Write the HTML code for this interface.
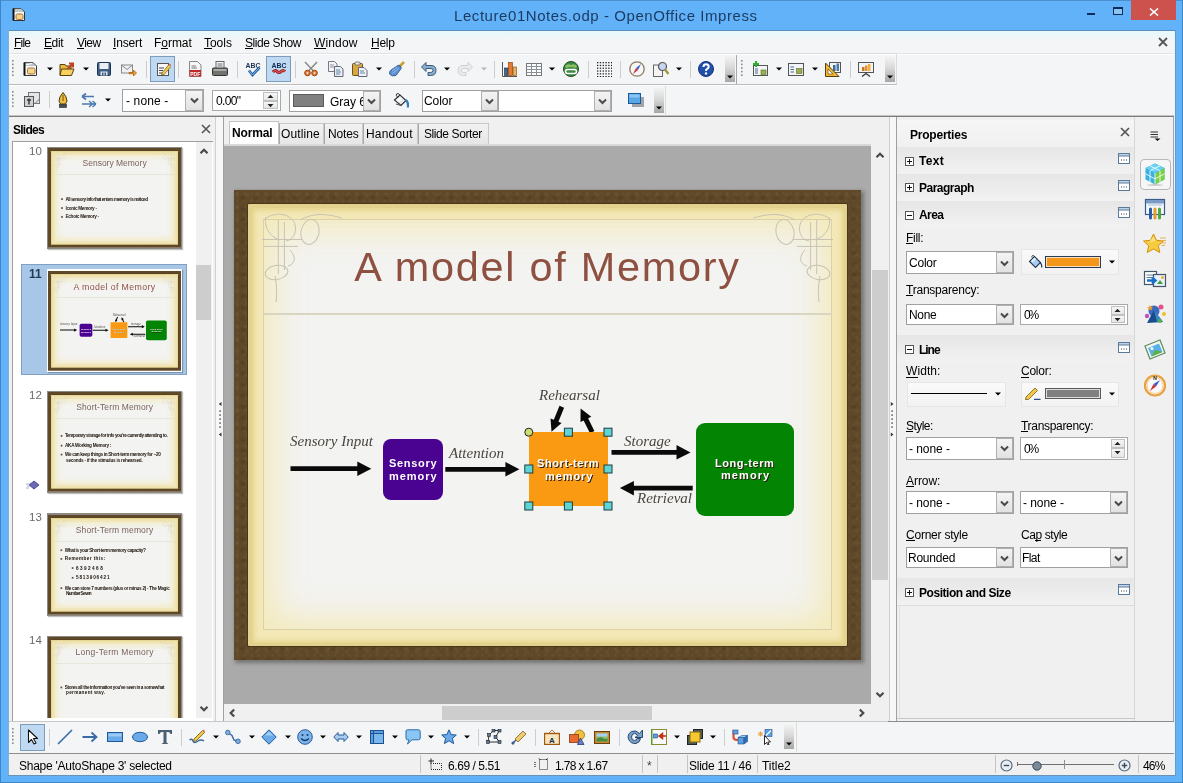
<!DOCTYPE html><html><head><meta charset="utf-8"><style>
html,body{margin:0;padding:0}
body{width:1183px;height:783px;position:relative;overflow:hidden;background:#62b2fa;font-family:"Liberation Sans",sans-serif}
div,span,svg{position:absolute;box-sizing:border-box}
.t{white-space:nowrap;line-height:1;will-change:transform}

</style></head><body>
<span class="t" style="left:454.20px;top:7.50px;font-size:15px;color:#1b3a5e;font-weight:normal;font-family:'Liberation Sans',sans-serif;font-style:normal;letter-spacing:0.566px;">Lecture01Notes.odp - OpenOffice Impress</span>
<div style="left:1087px;top:12.5px;width:8px;height:2.5px;background:#0f2d5a"></div>
<div style="left:1113px;top:7px;width:10px;height:8px;border:1px solid #0f2d5a;border-top-width:2px;background:#8cc4f0"></div>
<div style="left:1131px;top:0px;width:45px;height:20px;background:#cd514c"></div>
<svg style="position:absolute;left:1149px;top:8px;" width="10" height="8" viewBox="0 0 10 8"><path d="M1 0.5L9 7.5M9 0.5L1 7.5" stroke="#fff" stroke-width="1.6"/></svg>
<svg style="position:absolute;left:12px;top:7px;" width="14" height="15" viewBox="0 0 14 15"><path d="M1.5 1.5H9L12.5 5V13.5H1.5Z" fill="#fafafa" stroke="#333" stroke-width="1"/><path d="M1.5 1.5H9L12.5 5H1.5Z" fill="#9aa" opacity=".6"/><rect x="4" y="7" width="7" height="5.5" rx="1.5" fill="#f6d48a" stroke="#a07040" stroke-width="1"/><path d="M1.5 1.5V13.5" stroke="#111" stroke-width="2"/></svg>
<div style="left:8px;top:30px;width:1167px;height:745px;background:#f0f0f0"></div>
<div style="left:8px;top:30px;width:1167px;height:87px;background:#f4f5f6"></div>
<div style="left:8px;top:31px;width:1167px;height:10px;background:linear-gradient(#e6f8fc,#f4f5f6)"></div>
<div style="left:8px;top:54px;width:1167px;height:1px;background:#fff"></div>
<div style="left:8px;top:53px;width:1167px;height:1px;background:#e2e3e4"></div>
<div style="left:8px;top:115px;width:1167px;height:1px;background:#c4c4c4"></div>
<div style="left:8px;top:116px;width:1167px;height:1.5px;background:#7c7c7c"></div>
<span class="t" style="left:14.40px;top:36.84px;font-size:12px;color:#000;font-weight:normal;font-family:'Liberation Sans',sans-serif;font-style:normal;letter-spacing:-0.800px;">File</span>
<div style="left:14.4px;top:48.2px;width:6.4182237694300515px;height:1px;background:#000"></div>
<span class="t" style="left:44.30px;top:36.84px;font-size:12px;color:#000;font-weight:normal;font-family:'Liberation Sans',sans-serif;font-style:normal;letter-spacing:-0.400px;">Edit</span>
<div style="left:44.3px;top:48.2px;width:7.540647644927536px;height:1px;background:#000"></div>
<span class="t" style="left:76.50px;top:36.84px;font-size:12px;color:#000;font-weight:normal;font-family:'Liberation Sans',sans-serif;font-style:normal;letter-spacing:-0.567px;">View</span>
<div style="left:76.5px;top:48.2px;width:7.4772468507751935px;height:1px;background:#000"></div>
<span class="t" style="left:113.20px;top:36.84px;font-size:12px;color:#000;font-weight:normal;font-family:'Liberation Sans',sans-serif;font-style:normal;letter-spacing:-0.160px;">Insert</span>
<div style="left:113.2px;top:48.2px;width:3.245458333333333px;height:1px;background:#000"></div>
<span class="t" style="left:154.20px;top:36.84px;font-size:12px;color:#000;font-weight:normal;font-family:'Liberation Sans',sans-serif;font-style:normal;letter-spacing:-0.040px;">Format</span>
<div style="left:161.4911101973684px;top:48.2px;width:6.6383141447368414px;height:1px;background:#000"></div>
<span class="t" style="left:204.30px;top:36.84px;font-size:12px;color:#000;font-weight:normal;font-family:'Liberation Sans',sans-serif;font-style:normal;letter-spacing:-0.025px;">Tools</span>
<div style="left:204.3px;top:48.2px;width:7.303510044642857px;height:1px;background:#000"></div>
<span class="t" style="left:245.40px;top:36.84px;font-size:12px;color:#000;font-weight:normal;font-family:'Liberation Sans',sans-serif;font-style:normal;letter-spacing:-0.411px;">Slide Show</span>
<div style="left:245.4px;top:48.2px;width:7.511886439267886px;height:1px;background:#000"></div>
<span class="t" style="left:314.20px;top:36.84px;font-size:12px;color:#000;font-weight:normal;font-family:'Liberation Sans',sans-serif;font-style:normal;letter-spacing:0.140px;">Window</span>
<div style="left:314.2px;top:48.2px;width:11.512243852459013px;height:1px;background:#000"></div>
<span class="t" style="left:370.80px;top:36.84px;font-size:12px;color:#000;font-weight:normal;font-family:'Liberation Sans',sans-serif;font-style:normal;letter-spacing:-0.233px;">Help</span>
<div style="left:370.8px;top:48.2px;width:8.42004048582996px;height:1px;background:#000"></div>
<svg style="position:absolute;left:1158px;top:37px;" width="10" height="10" viewBox="0 0 10 10"><path d="M1 1L9 9M9 1L1 9" stroke="#555" stroke-width="1.8"/></svg>
<svg style="position:absolute;left:12px;top:60px;" width="3" height="19" viewBox="0 0 3 19"><rect x="0" y="0.0" width="1.6" height="1.6" fill="#8a8a8a"/><rect x="0" y="3.6" width="1.6" height="1.6" fill="#8a8a8a"/><rect x="0" y="7.2" width="1.6" height="1.6" fill="#8a8a8a"/><rect x="0" y="10.8" width="1.6" height="1.6" fill="#8a8a8a"/><rect x="0" y="14.4" width="1.6" height="1.6" fill="#8a8a8a"/></svg>
<svg style="position:absolute;left:23.3px;top:61.0px;" width="16" height="16" viewBox="0 0 16 16"><path d="M1.5 1.5H10L13.5 5V14.5H1.5Z" fill="#fafafa" stroke="#3a3a3a" stroke-width="1"/><path d="M1.5 1.5H10L13.5 5H1.5Z" fill="#8a9aaa" opacity=".6"/><path d="M2 4L9 2.5" stroke="#fff" stroke-width="1.2"/><rect x="4.5" y="7" width="7.5" height="6" rx="1.5" fill="#f6d48a" stroke="#a07040" stroke-width="1"/><path d="M1.5 1.5V14.5" stroke="#111" stroke-width="2"/></svg>
<svg style="position:absolute;left:58.8px;top:61.0px;" width="16" height="16" viewBox="0 0 16 16"><path d="M1 3.5H6L7 5H12V14H1Z" fill="#e8b840" stroke="#5a4010" stroke-width="1"/><path d="M2.5 8H15L12.5 14.5H1Z" fill="#f6d060" stroke="#5a4010" stroke-width="1"/><path d="M8.5 8L13.5 3M10 2.5H14V6.5" fill="none" stroke="#c04020" stroke-width="2"/></svg>
<svg style="position:absolute;left:96.0px;top:61.0px;" width="16" height="16" viewBox="0 0 16 16"><rect x="1.5" y="1.5" width="13" height="13" rx="1" fill="#3d5c82" stroke="#1e3350" stroke-width="1"/><rect x="3.5" y="2" width="9" height="6" fill="#e8eef4"/><rect x="4.5" y="10.5" width="7" height="4" fill="#dfe6ee"/><rect x="6" y="11.5" width="1.5" height="3" fill="#3d5c82"/><rect x="8.5" y="11.5" width="1.5" height="3" fill="#3d5c82"/></svg>
<svg style="position:absolute;left:121.0px;top:61.0px;" width="16" height="16" viewBox="0 0 16 16"><rect x="0.5" y="4" width="11" height="8" fill="#f0f0f0" stroke="#8a8a8a" stroke-width="1"/><path d="M0.5 4L6 8.5L11.5 4" fill="none" stroke="#8a8a8a" stroke-width="1"/><path d="M8 11.5H12.5V9L15.5 12L12.5 15V12.8H8Z" fill="#f0a040" stroke="#b06010" stroke-width=".8"/></svg>
<svg style="position:absolute;left:187.5px;top:61.0px;" width="16" height="16" viewBox="0 0 16 16"><path d="M1.5 0.5H9.5L13 4V15.5H1.5Z" fill="#f6f6f6" stroke="#888" stroke-width="1"/><path d="M3.5 5H8M3.5 7H9" stroke="#777" stroke-width="1"/><rect x="1.5" y="9" width="11.5" height="6.5" fill="#c0282a"/><text x="7.2" y="14.5" font-size="5" font-family="Liberation Sans" font-weight="bold" fill="#fff" text-anchor="middle">PDF</text></svg>
<svg style="position:absolute;left:212.0px;top:61.0px;" width="16" height="16" viewBox="0 0 16 16"><rect x="4" y="0.5" width="8" height="7" fill="#fafafa" stroke="#666" stroke-width="1"/><path d="M5.5 3H10.5M5.5 5H10.5" stroke="#667" stroke-width="1"/><rect x="0.5" y="7" width="15" height="7.5" rx="1" fill="#707470" stroke="#333" stroke-width="1"/><rect x="1.5" y="8" width="13" height="2" fill="#a8aca8"/></svg>
<svg style="position:absolute;left:245.0px;top:61.0px;" width="16" height="16" viewBox="0 0 16 16"><text x="8" y="6.8" font-size="8" font-family="Liberation Sans" font-weight="bold" fill="#1a3050" text-anchor="middle" textLength="15" lengthAdjust="spacingAndGlyphs">ABC</text><path d="M4 9.5L7.5 14L14.5 6.5" fill="none" stroke="#1a5aa0" stroke-width="2.6"/><path d="M4 9.5L7.5 14L14.5 6.5" fill="none" stroke="#8ac0ee" stroke-width="1"/></svg>
<svg style="position:absolute;left:303.0px;top:61.0px;" width="16" height="16" viewBox="0 0 16 16"><path d="M2 1L10.5 10M14 1L5.5 10" stroke="#8a8a8a" stroke-width="1.5"/><circle cx="4.5" cy="12" r="2.8" fill="#e07a30" stroke="#9a4510" stroke-width="1"/><circle cx="11.5" cy="12" r="2.8" fill="#e07a30" stroke="#9a4510" stroke-width="1"/><circle cx="4.5" cy="12" r="1" fill="#fde"/><circle cx="11.5" cy="12" r="1" fill="#fde"/></svg>
<svg style="position:absolute;left:327.5px;top:61.0px;" width="16" height="16" viewBox="0 0 16 16"><path d="M0.5 0.5H6.5L9 3V10.5H0.5Z" fill="#f2f4f6" stroke="#778" stroke-width="1"/><path d="M2 4H6M2 6H7" stroke="#778" stroke-width=".8"/><path d="M6.5 5.5H12.5L15 8V15.5H6.5Z" fill="#e6eef6" stroke="#667" stroke-width="1"/><path d="M8 9H12M8 11H13M8 13H12" stroke="#4a6a90" stroke-width=".8"/></svg>
<svg style="position:absolute;left:351.7px;top:61.0px;" width="16" height="16" viewBox="0 0 16 16"><rect x="0.5" y="2.5" width="10" height="12" rx="1" fill="#d8a840" stroke="#6a5020" stroke-width="1"/><rect x="3" y="1" width="5" height="3" rx="1" fill="#e8e8e8" stroke="#666" stroke-width=".8"/><path d="M6.5 6.5H12L15 9.5V15.5H6.5Z" fill="#eef2f6" stroke="#667" stroke-width="1"/><path d="M8 10H12M8 12H13" stroke="#4a6a90" stroke-width=".8"/></svg>
<svg style="position:absolute;left:389.0px;top:61.0px;" width="16" height="16" viewBox="0 0 16 16"><path d="M11 5L15 1" stroke="#c8a030" stroke-width="2.5"/><path d="M10 4.5L12 6.5" stroke="#555" stroke-width="1.5"/><path d="M9.5 4L12.5 7L7 14.5Q3 16 0.5 13Q0 10.5 2 9Z" fill="#5a8fd0" stroke="#2a5090" stroke-width=".8"/><path d="M3 10L8 6M3.5 12.5L9.5 7.5" stroke="#a8cef0" stroke-width=".8"/></svg>
<svg style="position:absolute;left:421.0px;top:61.0px;" width="16" height="16" viewBox="0 0 16 16"><path d="M5 4.5H10Q15 4.5 15 9.5Q15 14.5 9.5 14.5H7V11.5H9.5Q12 11.5 12 9.5Q12 7.5 10 7.5H5V10.5L0.5 6L5 1.5Z" fill="#8aaed0" stroke="#3a5a7a" stroke-width="1"/></svg>
<svg style="position:absolute;left:457.0px;top:61.0px;" width="16" height="16" viewBox="0 0 16 16"><path d="M11 4.5H6Q1 4.5 1 9.5Q1 14.5 6.5 14.5H9V11.5H6.5Q4 11.5 4 9.5Q4 7.5 6 7.5H11V10.5L15.5 6L11 1.5Z" fill="#ececec" stroke="#cfcfcf" stroke-width="1"/></svg>
<svg style="position:absolute;left:502.3px;top:61.0px;" width="16" height="16" viewBox="0 0 16 16"><path d="M0.5 1V15.5H15" fill="none" stroke="#555" stroke-width="1"/><rect x="2.5" y="7" width="3.5" height="7.5" fill="#3d6a90" stroke="#223" stroke-width=".6"/><rect x="6.5" y="1.5" width="4" height="13" fill="#e87a30" stroke="#7a3a10" stroke-width=".6"/><rect x="11" y="6" width="3.5" height="8.5" fill="#f0b060" stroke="#7a4a10" stroke-width=".6"/></svg>
<svg style="position:absolute;left:526.0px;top:61.0px;" width="16" height="16" viewBox="0 0 16 16"><rect x="0.5" y="2.5" width="15" height="12" fill="#fafbfc" stroke="#777" stroke-width="1"/><path d="M0.5 5.5H15.5M0.5 8.5H15.5M0.5 11.5H15.5M5.5 2.5V14.5M10.5 2.5V14.5" stroke="#8a8f95" stroke-width="1"/></svg>
<svg style="position:absolute;left:563.0px;top:61.0px;" width="16" height="16" viewBox="0 0 16 16"><circle cx="8" cy="8" r="7.5" fill="#3a8a40" stroke="#1e4a20" stroke-width="1"/><path d="M2 5Q5 2 8 4Q11 2 14 5L13 7Q8 5 3 7Z" fill="#8ac060"/><rect x="2.5" y="8.5" width="11" height="4" rx="2" fill="none" stroke="#fff" stroke-width="1.6"/></svg>
<svg style="position:absolute;left:596.0px;top:61.0px;" width="16" height="16" viewBox="0 0 16 16"><rect x="1.0" y="1.0" width="1.3" height="1.3" fill="#222"/><rect x="1.0" y="3.8" width="1.3" height="1.3" fill="#222"/><rect x="1.0" y="6.6" width="1.3" height="1.3" fill="#222"/><rect x="1.0" y="9.4" width="1.3" height="1.3" fill="#222"/><rect x="1.0" y="12.2" width="1.3" height="1.3" fill="#222"/><rect x="1.0" y="15.0" width="1.3" height="1.3" fill="#222"/><rect x="3.8" y="1.0" width="1.3" height="1.3" fill="#222"/><rect x="3.8" y="3.8" width="1.3" height="1.3" fill="#222"/><rect x="3.8" y="6.6" width="1.3" height="1.3" fill="#222"/><rect x="3.8" y="9.4" width="1.3" height="1.3" fill="#222"/><rect x="3.8" y="12.2" width="1.3" height="1.3" fill="#222"/><rect x="3.8" y="15.0" width="1.3" height="1.3" fill="#222"/><rect x="6.6" y="1.0" width="1.3" height="1.3" fill="#222"/><rect x="6.6" y="3.8" width="1.3" height="1.3" fill="#222"/><rect x="6.6" y="6.6" width="1.3" height="1.3" fill="#222"/><rect x="6.6" y="9.4" width="1.3" height="1.3" fill="#222"/><rect x="6.6" y="12.2" width="1.3" height="1.3" fill="#222"/><rect x="6.6" y="15.0" width="1.3" height="1.3" fill="#222"/><rect x="9.4" y="1.0" width="1.3" height="1.3" fill="#222"/><rect x="9.4" y="3.8" width="1.3" height="1.3" fill="#222"/><rect x="9.4" y="6.6" width="1.3" height="1.3" fill="#222"/><rect x="9.4" y="9.4" width="1.3" height="1.3" fill="#222"/><rect x="9.4" y="12.2" width="1.3" height="1.3" fill="#222"/><rect x="9.4" y="15.0" width="1.3" height="1.3" fill="#222"/><rect x="12.2" y="1.0" width="1.3" height="1.3" fill="#222"/><rect x="12.2" y="3.8" width="1.3" height="1.3" fill="#222"/><rect x="12.2" y="6.6" width="1.3" height="1.3" fill="#222"/><rect x="12.2" y="9.4" width="1.3" height="1.3" fill="#222"/><rect x="12.2" y="12.2" width="1.3" height="1.3" fill="#222"/><rect x="12.2" y="15.0" width="1.3" height="1.3" fill="#222"/><rect x="15.0" y="1.0" width="1.3" height="1.3" fill="#222"/><rect x="15.0" y="3.8" width="1.3" height="1.3" fill="#222"/><rect x="15.0" y="6.6" width="1.3" height="1.3" fill="#222"/><rect x="15.0" y="9.4" width="1.3" height="1.3" fill="#222"/><rect x="15.0" y="12.2" width="1.3" height="1.3" fill="#222"/><rect x="15.0" y="15.0" width="1.3" height="1.3" fill="#222"/></svg>
<svg style="position:absolute;left:628.5px;top:61.0px;" width="16" height="16" viewBox="0 0 16 16"><circle cx="8" cy="8" r="7.2" fill="#f6f6f6" stroke="#8a7a60" stroke-width="1.3"/><path d="M12 3L9 9L7 7Z" fill="#3a5ad0"/><path d="M4 13L7 7L9 9Z" fill="#d03030"/></svg>
<svg style="position:absolute;left:653.0px;top:61.0px;" width="16" height="16" viewBox="0 0 16 16"><rect x="0.5" y="4" width="9" height="11.5" fill="#f4f4f4" stroke="#666" stroke-width="1"/><circle cx="9.5" cy="5.5" r="4" fill="#c8d4f0" stroke="#555" stroke-width="1.2"/><path d="M12 8.5L15.5 13" stroke="#9a9a30" stroke-width="2.2"/></svg>
<svg style="position:absolute;left:698.0px;top:61.0px;" width="16" height="16" viewBox="0 0 16 16"><circle cx="8" cy="8" r="7.5" fill="#2050a8" stroke="#15307a" stroke-width="1"/><path d="M5.5 6Q5.5 3.3 8 3.3Q10.7 3.3 10.7 5.8Q10.7 7.3 8.8 8.2Q8 8.7 8 10" fill="none" stroke="#fff" stroke-width="2"/><circle cx="8" cy="12.4" r="1.2" fill="#fff"/></svg>
<div style="left:150px;top:56.3px;width:25px;height:26.2px;background:#c0d9f2;border:1px solid #7d9cbc"></div>
<svg style="position:absolute;left:154.5px;top:61.0px;" width="16" height="16" viewBox="0 0 16 16"><rect x="2.5" y="2.5" width="11" height="12" fill="#f8f8f8" stroke="#555" stroke-width="1"/><path d="M4 7H9M4 9.5H8M4 12H10" stroke="#445" stroke-width="1"/><path d="M7 12L14 3.5L16 5.5L9 13.5L6.5 14Z" fill="#f0d050" stroke="#806010" stroke-width=".8"/><path d="M14 3.5L15 2.5L16.5 4L16 5.5Z" fill="#e07070"/></svg>
<div style="left:266px;top:56.3px;width:25px;height:26.2px;background:#c0d9f2;border:1px solid #7d9cbc"></div>
<svg style="position:absolute;left:270.5px;top:61.0px;" width="16" height="16" viewBox="0 0 16 16"><text x="8" y="6.8" font-size="8" font-family="Liberation Sans" font-weight="bold" fill="#102a50" text-anchor="middle" textLength="15" lengthAdjust="spacingAndGlyphs">ABC</text><path d="M2 11Q4 8.5 6 10.5T10 10.5T14 10.5" fill="none" stroke="#8a1818" stroke-width="3"/><path d="M2 11Q4 8.5 6 10.5T10 10.5T14 10.5" fill="none" stroke="#e05050" stroke-width="1.2"/></svg>
<svg style="position:absolute;left:46.6px;top:67px;" width="6" height="4" viewBox="0 0 6 4"><path d="M0 0.5H6L3 3.5Z" fill="#000"/></svg>
<svg style="position:absolute;left:82.5px;top:67px;" width="6" height="4" viewBox="0 0 6 4"><path d="M0 0.5H6L3 3.5Z" fill="#000"/></svg>
<svg style="position:absolute;left:375.5px;top:67px;" width="6" height="4" viewBox="0 0 6 4"><path d="M0 0.5H6L3 3.5Z" fill="#000"/></svg>
<svg style="position:absolute;left:444.4px;top:67px;" width="6" height="4" viewBox="0 0 6 4"><path d="M0 0.5H6L3 3.5Z" fill="#000"/></svg>
<svg style="position:absolute;left:549.3px;top:67px;" width="6" height="4" viewBox="0 0 6 4"><path d="M0 0.5H6L3 3.5Z" fill="#000"/></svg>
<svg style="position:absolute;left:676.3px;top:67px;" width="6" height="4" viewBox="0 0 6 4"><path d="M0 0.5H6L3 3.5Z" fill="#000"/></svg>
<svg style="position:absolute;left:480.6px;top:67px;" width="6" height="4" viewBox="0 0 6 4"><path d="M0 0.5H6L3 3.5Z" fill="#b8b8b8"/></svg>
<div style="left:145.8px;top:61px;width:1px;height:17px;background:#cdcdcd"></div>
<div style="left:178.3px;top:61px;width:1px;height:17px;background:#cdcdcd"></div>
<div style="left:236.5px;top:61px;width:1px;height:17px;background:#cdcdcd"></div>
<div style="left:295px;top:61px;width:1px;height:17px;background:#cdcdcd"></div>
<div style="left:413.6px;top:61px;width:1px;height:17px;background:#cdcdcd"></div>
<div style="left:493.8px;top:61px;width:1px;height:17px;background:#cdcdcd"></div>
<div style="left:587.5px;top:61px;width:1px;height:17px;background:#cdcdcd"></div>
<div style="left:620.2px;top:61px;width:1px;height:17px;background:#cdcdcd"></div>
<div style="left:689.5px;top:61px;width:1px;height:17px;background:#cdcdcd"></div>
<div style="left:725px;top:56px;width:10px;height:26px;background:linear-gradient(#f2f2f2,#d8d8d8 45%,#a6a6a6)"></div>
<svg style="position:absolute;left:727.0px;top:75px;" width="6" height="4" viewBox="0 0 6 4"><path d="M0 0.5H6L3 3.5Z" fill="#000"/></svg>
<div style="left:736px;top:55px;width:1px;height:29px;background:#a8a8a8"></div>
<div style="left:8px;top:84px;width:889px;height:1px;background:#bcbcbc"></div>
<div style="left:8px;top:85px;width:889px;height:1px;background:#ffffff"></div>
<div style="left:737px;top:53px;width:160px;height:31px;border:1px solid #dcdcdc;border-left:none;border-bottom:none"></div>
<svg style="position:absolute;left:741px;top:60px;" width="3" height="19" viewBox="0 0 3 19"><rect x="0" y="0.0" width="1.6" height="1.6" fill="#8a8a8a"/><rect x="0" y="3.6" width="1.6" height="1.6" fill="#8a8a8a"/><rect x="0" y="7.2" width="1.6" height="1.6" fill="#8a8a8a"/><rect x="0" y="10.8" width="1.6" height="1.6" fill="#8a8a8a"/><rect x="0" y="14.4" width="1.6" height="1.6" fill="#8a8a8a"/></svg>
<svg style="position:absolute;left:752.0px;top:61.0px;" width="16" height="16" viewBox="0 0 16 16"><rect x="1.5" y="4.5" width="14" height="10" fill="#f2f4f6" stroke="#555" stroke-width="1"/><path d="M3 8H6M3 10H6M3 12H6" stroke="#4a6a90" stroke-width="1"/><rect x="9" y="9" width="5" height="4.5" fill="#9ab050" stroke="#5a7020" stroke-width=".6"/><path d="M4 0V6M1 3H7" stroke="#30b030" stroke-width="2.2"/></svg>
<svg style="position:absolute;left:775.6px;top:67px;" width="6" height="4" viewBox="0 0 6 4"><path d="M0 0.5H6L3 3.5Z" fill="#000"/></svg>
<svg style="position:absolute;left:788.0px;top:61.0px;" width="16" height="16" viewBox="0 0 16 16"><rect x="0.5" y="2.5" width="15" height="12" fill="#f2f4f6" stroke="#555" stroke-width="1"/><path d="M2.5 6H6M2.5 8.5H6M2.5 11H6" stroke="#4a6a90" stroke-width="1"/><rect x="8.5" y="7.5" width="5.5" height="5" fill="#9ab050" stroke="#5a7020" stroke-width=".6"/></svg>
<svg style="position:absolute;left:811.5px;top:67px;" width="6" height="4" viewBox="0 0 6 4"><path d="M0 0.5H6L3 3.5Z" fill="#000"/></svg>
<svg style="position:absolute;left:824.7px;top:61.0px;" width="16" height="16" viewBox="0 0 16 16"><rect x="4.5" y="1.5" width="11" height="10" fill="#f4f4f4" stroke="#555" stroke-width="1"/><rect x="8" y="4" width="2.5" height="6" fill="#3d6a90"/><rect x="11.5" y="2.5" width="2.5" height="7.5" fill="#4a7ab0"/><path d="M0.5 2V15.5H14Z" fill="#f0b830" stroke="#5a4010" stroke-width="1"/><path d="M3 8V13H8Z" fill="#f4f4f4" stroke="#5a4010" stroke-width=".6"/></svg>
<div style="left:849.5px;top:61px;width:1px;height:17px;background:#cdcdcd"></div>
<svg style="position:absolute;left:858.0px;top:61.0px;" width="16" height="16" viewBox="0 0 16 16"><rect x="0.5" y="1.5" width="15" height="10" fill="#f4f4f4" stroke="#555" stroke-width="1"/><rect x="4" y="6" width="2.5" height="4" fill="#d07020"/><rect x="7" y="4.5" width="2.5" height="5.5" fill="#e89030"/><rect x="10" y="3" width="2.5" height="7" fill="#f0b040"/><path d="M8 11.5V13M4 15.5L8 12.5L12 15.5" fill="none" stroke="#333" stroke-width="1.2"/></svg>
<div style="left:885px;top:56.5px;width:9.5px;height:25.099999999999994px;background:linear-gradient(#f2f2f2,#d8d8d8 45%,#a6a6a6)"></div>
<svg style="position:absolute;left:886.75px;top:74.6px;" width="6" height="4" viewBox="0 0 6 4"><path d="M0 0.5H6L3 3.5Z" fill="#000"/></svg>
<svg style="position:absolute;left:12px;top:91px;" width="3" height="19" viewBox="0 0 3 19"><rect x="0" y="0.0" width="1.6" height="1.6" fill="#8a8a8a"/><rect x="0" y="3.6" width="1.6" height="1.6" fill="#8a8a8a"/><rect x="0" y="7.2" width="1.6" height="1.6" fill="#8a8a8a"/><rect x="0" y="10.8" width="1.6" height="1.6" fill="#8a8a8a"/><rect x="0" y="14.4" width="1.6" height="1.6" fill="#8a8a8a"/></svg>
<svg style="position:absolute;left:24.0px;top:91.5px;" width="16" height="16" viewBox="0 0 16 16"><rect x="4.5" y="0.5" width="11" height="11" fill="#e4e6e8" stroke="#777" stroke-width="1"/><path d="M11 11.5L15.5 7" fill="#fff" stroke="#777" stroke-width="1"/><rect x="0.5" y="4.5" width="9" height="10" fill="#cfd2d5" stroke="#555" stroke-width="1"/><path d="M5 6.5V12.5M3 8H7" stroke="#333" stroke-width="1.4"/></svg>
<div style="left:48.6px;top:91px;width:1px;height:17px;background:#cdcdcd"></div>
<svg style="position:absolute;left:57.5px;top:91.5px;" width="16" height="16" viewBox="0 0 16 16"><path d="M5 0.5Q1 5 1 9L2.5 12H7.5L9 9Q9 5 5 0.5Z" fill="#f0c040" stroke="#4a3810" stroke-width="1"/><path d="M5 3V9" stroke="#4a3810" stroke-width=".8"/><rect x="1.5" y="12.5" width="7" height="3" fill="#40504a" stroke="#222" stroke-width=".6"/></svg>
<svg style="position:absolute;left:81.0px;top:91.5px;" width="16" height="16" viewBox="0 0 16 16"><path d="M1 4.5H13M1 4.5L5 1.5M1 4.5L5 7.5" fill="none" stroke="#4a78b0" stroke-width="1.6"/><path d="M1 12H15M15 12L11.5 9M15 12L11.5 15M11.5 12L8 9M11.5 12L8 15" fill="none" stroke="#4a78b0" stroke-width="1.3"/></svg>
<svg style="position:absolute;left:104.5px;top:97.5px;" width="6" height="4" viewBox="0 0 6 4"><path d="M0 0.5H6L3 3.5Z" fill="#000"/></svg>
<div style="left:122px;top:89.2px;width:82px;height:22.5px;background:#fff;border:1px solid #a0a0a0"></div>
<div style="left:185px;top:90.2px;width:18px;height:20.5px;background:linear-gradient(#f4f4f4,#e2e2e2);border:1px solid #b0b0b0"></div>
<svg style="position:absolute;left:189.5px;top:97.45px;" width="9" height="7" viewBox="0 0 9 7"><path d="M1 1.5L4.5 5L8 1.5" fill="none" stroke="#4a4a4a" stroke-width="2"/></svg>
<span class="t" style="left:125.50px;top:94.59px;font-size:12px;color:#000;font-weight:normal;font-family:'Liberation Sans',sans-serif;font-style:normal;letter-spacing:0.129px;">- none -</span>
<div style="left:212px;top:90.2px;width:69px;height:20.700000000000003px;background:#fff;border:1px solid #a8a8a8"></div>
<div style="left:263px;top:92.2px;width:15px;height:8.350000000000009px;background:linear-gradient(#f6f6f6,#e6e6e6);border:1px solid #c0c0c0"></div>
<div style="left:263px;top:100.55000000000001px;width:15px;height:8.349999999999994px;background:linear-gradient(#f6f6f6,#e6e6e6);border:1px solid #c0c0c0"></div>
<svg style="position:absolute;left:267.0px;top:93.55000000000001px;" width="7" height="5" viewBox="0 0 7 5"><path d="M0.5 4L3.5 0.8L6.5 4Z" fill="#222"/></svg>
<svg style="position:absolute;left:267.0px;top:102.55000000000001px;" width="7" height="5" viewBox="0 0 7 5"><path d="M0.5 1L3.5 4.2L6.5 1Z" fill="#222"/></svg>
<span class="t" style="left:216.30px;top:94.69px;font-size:12px;color:#000;font-weight:normal;font-family:'Liberation Sans',sans-serif;font-style:normal;letter-spacing:-0.675px;">0.00"</span>
<div style="left:289.4px;top:89.5px;width:91.60000000000002px;height:22.0px;background:#fff;border:1px solid #a0a0a0"></div>
<div style="left:364px;top:90.5px;width:16px;height:20.0px;background:linear-gradient(#f4f4f4,#e2e2e2);border:1px solid #b0b0b0"></div>
<svg style="position:absolute;left:367.5px;top:97.5px;" width="9" height="7" viewBox="0 0 9 7"><path d="M1 1.5L4.5 5L8 1.5" fill="none" stroke="#4a4a4a" stroke-width="2"/></svg>
<div style="left:293px;top:94px;width:31px;height:12.6px;background:#808080;border:1px solid #5a5a5a"></div>
<span class="t" style="left:329.60px;top:95.54px;font-size:12px;color:#000;font-weight:normal;font-family:'Liberation Sans',sans-serif;font-style:normal;letter-spacing:0.000px;">Gray 6</span>
<div style="left:362.5px;top:90.5px;width:17.0px;height:20.0px;background:linear-gradient(#f4f4f4,#e2e2e2);border:1px solid #b0b0b0"></div>
<svg style="position:absolute;left:366.5px;top:97.5px;" width="9" height="7" viewBox="0 0 9 7"><path d="M1 1.5L4.5 5L8 1.5" fill="none" stroke="#4a4a4a" stroke-width="2"/></svg>
<svg style="position:absolute;left:393.0px;top:91.5px;" width="16" height="16" viewBox="0 0 16 16"><path d="M1.5 8L7 3L13 8.5L8 13.5Z" fill="#e8eaec" stroke="#333" stroke-width="1.2"/><path d="M3 8L7 4.5L9.5 6.8L5.5 10.5Z" fill="#fafafa"/><path d="M7 3Q5 0.5 3.5 2Q2.5 3.5 5 5.5" fill="none" stroke="#333" stroke-width="1"/><path d="M12.5 8Q15.5 9.5 15 15.5" fill="none" stroke="#2a80c0" stroke-width="2.4"/><path d="M3 12L8 13.5" stroke="#555" stroke-width="1"/></svg>
<div style="left:422.4px;top:89.5px;width:76.10000000000002px;height:22.0px;background:#fff;border:1px solid #a0a0a0"></div>
<div style="left:480.5px;top:90.5px;width:17.0px;height:20.0px;background:linear-gradient(#f4f4f4,#e2e2e2);border:1px solid #b0b0b0"></div>
<svg style="position:absolute;left:484.5px;top:97.5px;" width="9" height="7" viewBox="0 0 9 7"><path d="M1 1.5L4.5 5L8 1.5" fill="none" stroke="#4a4a4a" stroke-width="2"/></svg>
<span class="t" style="left:424.40px;top:94.64px;font-size:12px;color:#000;font-weight:normal;font-family:'Liberation Sans',sans-serif;font-style:normal;letter-spacing:-0.075px;">Color</span>
<div style="left:498px;top:89.5px;width:113.70000000000005px;height:22.0px;background:#fff;border:1px solid #a0a0a0"></div>
<div style="left:593.7px;top:90.5px;width:17.0px;height:20.0px;background:linear-gradient(#f4f4f4,#e2e2e2);border:1px solid #b0b0b0"></div>
<svg style="position:absolute;left:597.7px;top:97.5px;" width="9" height="7" viewBox="0 0 9 7"><path d="M1 1.5L4.5 5L8 1.5" fill="none" stroke="#4a4a4a" stroke-width="2"/></svg>
<svg style="position:absolute;left:627.5px;top:91.5px;" width="16" height="16" viewBox="0 0 16 16"><rect x="4" y="5" width="12" height="10" fill="#9ea4aa"/><rect x="0.5" y="1.5" width="12" height="10" fill="#58a8e8" stroke="#1a5a98" stroke-width="1"/><rect x="1.5" y="2.5" width="10" height="3" fill="#8ac6f4"/></svg>
<div style="left:654px;top:88px;width:9.600000000000023px;height:24.599999999999994px;background:linear-gradient(#f2f2f2,#d8d8d8 45%,#a6a6a6)"></div>
<svg style="position:absolute;left:655.8px;top:105.6px;" width="6" height="4" viewBox="0 0 6 4"><path d="M0 0.5H6L3 3.5Z" fill="#000"/></svg>
<div style="left:665px;top:86px;width:1px;height:30px;background:#dadada"></div>
<div style="left:8px;top:117px;width:208px;height:604px;background:#f0f0f0"></div>
<span class="t" style="left:12.80px;top:123.54px;font-size:12px;color:#000;font-weight:bold;font-family:'Liberation Sans',sans-serif;font-style:normal;letter-spacing:-0.760px;">Slides</span>
<svg style="position:absolute;left:201px;top:124px;" width="10" height="10" viewBox="0 0 10 10"><path d="M1 1L9 9M9 1L1 9" stroke="#555" stroke-width="1.6"/></svg>
<div style="left:12px;top:141px;width:201px;height:580px;background:#fff;border-top:1px solid #a0a0a0;border-left:1px solid #a0a0a0"></div>
<div style="left:196px;top:142px;width:16px;height:576px;background:#f0f0f0"></div>
<div style="left:196px;top:265px;width:15px;height:55px;background:#cdcdcd"></div>
<svg style="position:absolute;left:198px;top:147px;" width="12" height="8" viewBox="0 0 12 8"><path d="M2.5 6.2L6 2.7L9.5 6.2" fill="none" stroke="#4a4a4a" stroke-width="2.2"/></svg>
<svg style="position:absolute;left:198px;top:705px;" width="12" height="8" viewBox="0 0 12 8"><path d="M2.5 1.8L6 5.3L9.5 1.8" fill="none" stroke="#4a4a4a" stroke-width="2.2"/></svg>
<div style="left:0;top:0;width:1183px;height:783px;clip-path:inset(142px 987px 65px 13px)">
<div style="left:21.3px;top:264.3px;width:166px;height:111px;background:#a8c6e6;border:1px solid #7f9fc4"></div>
<div style="left:46.5px;top:146.79999999999998px;width:135.5px;height:102.3px;background:#8e8882;box-shadow:1px 1px 1px rgba(0,0,0,.25)"></div>
<div style="left:48px;top:148.1px;width:627px;height:470px;transform:scale(0.2121);transform-origin:0 0;">
<div style="left:0px;top:0px;width:627px;height:470px;background:#5e4828;background-image:radial-gradient(ellipse 3px 4px at 30% 40%, rgba(130,105,70,.28), transparent),radial-gradient(ellipse 4px 3px at 70% 70%, rgba(35,24,8,.22), transparent),radial-gradient(circle 2px at 50% 50%, rgba(140,115,80,.2), transparent);background-size:10px 12px,13px 11px,7px 7px;"></div>
<div style="left:13px;top:13px;width:601px;height:444px;background:#4a361a;border-radius:2px"></div>
<div style="left:14px;top:14px;width:599px;height:442px;background:#e2d28e;border-radius:1px"></div>
<div style="left:17.5px;top:17.5px;width:592px;height:435px;background:#f3e8b6;box-shadow:inset 0 0 5px 2px rgba(225,205,125,.8)"></div>
<div style="left:29px;top:29px;width:569px;height:411px;background:#f3f3f2;border:1px solid rgba(215,205,160,.9);box-shadow:inset 0 0 36px 8px rgba(243,232,170,.85)"></div>
<div style="left:29px;top:122.5px;width:569px;height:2px;background:#d9d6c0"></div>
<svg style="position:absolute;left:0px;top:0px;" width="627" height="470" viewBox="0 0 627 470"><g fill="none" stroke="#c8c3b3" stroke-width="1"><ellipse cx="76" cy="42" rx="9" ry="12.5" transform="rotate(12 76 42)"/><path d="M30 30 C38 22 54 22 60 32 C64 40 60 50 52 51"/><path d="M32 27 C30 36 34 46 46 50"/><path d="M28 49.5 H68 M30 56.4 H64"/><path d="M44.3 30 V84 M50.4 32 V80"/><ellipse cx="42.5" cy="82.5" rx="11.5" ry="7" transform="rotate(-10 42.5 82.5)"/><path d="M41 86 C43 96 43 104 42 112"/><path d="M66 30 C80 22 94 24 108 28"/><path d="M56 60 C62 66 62 74 54 76"/></g><g transform="translate(627,0) scale(-1,1)"><g fill="none" stroke="#c8c3b3" stroke-width="1"><ellipse cx="76" cy="42" rx="9" ry="12.5" transform="rotate(12 76 42)"/><path d="M30 30 C38 22 54 22 60 32 C64 40 60 50 52 51"/><path d="M32 27 C30 36 34 46 46 50"/><path d="M28 49.5 H68 M30 56.4 H64"/><path d="M44.3 30 V84 M50.4 32 V80"/><ellipse cx="42.5" cy="82.5" rx="11.5" ry="7" transform="rotate(-10 42.5 82.5)"/><path d="M41 86 C43 96 43 104 42 112"/><path d="M66 30 C80 22 94 24 108 28"/><path d="M56 60 C62 66 62 74 54 76"/></g></g></svg>
<span class="t" style="left:0;width:627px;text-align:center;display:none"></span>
<span class="t" style="left:162.50px;top:53.14px;font-size:40px;color:#7a625a;font-weight:normal;font-family:'Liberation Sans',sans-serif;font-style:normal;letter-spacing:-0.023px;">Sensory Memory</span>
<div style="left:62px;top:237px;width:8px;height:8px;background:#5a4a38"></div>
<span class="t" style="left:82.00px;top:230.38px;font-size:22px;color:#1a120a;font-weight:bold;font-family:'Liberation Sans',sans-serif;font-style:normal;letter-spacing:-2.091px;">All sensory info that enters memory is noticed</span>
<div style="left:62px;top:279px;width:8px;height:8px;background:#5a4a38"></div>
<span class="t" style="left:82.00px;top:272.38px;font-size:22px;color:#1a120a;font-weight:bold;font-family:'Liberation Sans',sans-serif;font-style:normal;letter-spacing:-1.321px;">Iconic Memory -</span>
<div style="left:62px;top:321px;width:8px;height:8px;background:#5a4a38"></div>
<span class="t" style="left:82.00px;top:314.38px;font-size:22px;color:#1a120a;font-weight:bold;font-family:'Liberation Sans',sans-serif;font-style:normal;letter-spacing:-1.214px;">Echoic Memory -</span>
</div>
<span class="t" style="left:29.00px;top:145.87px;font-size:11.5px;color:#6a6a6a;font-weight:normal;font-family:'Liberation Sans',sans-serif;font-style:normal;">10</span>
<div style="left:46.5px;top:269.3px;width:135.5px;height:102.3px;background:#ffffff;box-shadow:1px 1px 1px rgba(0,0,0,.25)"></div>
<div style="left:48px;top:270.6px;width:627px;height:470px;transform:scale(0.2121);transform-origin:0 0;">
<div style="left:0px;top:0px;width:627px;height:470px;background:#5e4828;background-image:radial-gradient(ellipse 3px 4px at 30% 40%, rgba(130,105,70,.28), transparent),radial-gradient(ellipse 4px 3px at 70% 70%, rgba(35,24,8,.22), transparent),radial-gradient(circle 2px at 50% 50%, rgba(140,115,80,.2), transparent);background-size:10px 12px,13px 11px,7px 7px;"></div>
<div style="left:13px;top:13px;width:601px;height:444px;background:#4a361a;border-radius:2px"></div>
<div style="left:14px;top:14px;width:599px;height:442px;background:#e2d28e;border-radius:1px"></div>
<div style="left:17.5px;top:17.5px;width:592px;height:435px;background:#f3e8b6;box-shadow:inset 0 0 5px 2px rgba(225,205,125,.8)"></div>
<div style="left:29px;top:29px;width:569px;height:411px;background:#f3f3f2;border:1px solid rgba(215,205,160,.9);box-shadow:inset 0 0 36px 8px rgba(243,232,170,.85)"></div>
<div style="left:29px;top:122.5px;width:569px;height:2px;background:#d9d6c0"></div>
<svg style="position:absolute;left:0px;top:0px;" width="627" height="470" viewBox="0 0 627 470"><g fill="none" stroke="#c8c3b3" stroke-width="1"><ellipse cx="76" cy="42" rx="9" ry="12.5" transform="rotate(12 76 42)"/><path d="M30 30 C38 22 54 22 60 32 C64 40 60 50 52 51"/><path d="M32 27 C30 36 34 46 46 50"/><path d="M28 49.5 H68 M30 56.4 H64"/><path d="M44.3 30 V84 M50.4 32 V80"/><ellipse cx="42.5" cy="82.5" rx="11.5" ry="7" transform="rotate(-10 42.5 82.5)"/><path d="M41 86 C43 96 43 104 42 112"/><path d="M66 30 C80 22 94 24 108 28"/><path d="M56 60 C62 66 62 74 54 76"/></g><g transform="translate(627,0) scale(-1,1)"><g fill="none" stroke="#c8c3b3" stroke-width="1"><ellipse cx="76" cy="42" rx="9" ry="12.5" transform="rotate(12 76 42)"/><path d="M30 30 C38 22 54 22 60 32 C64 40 60 50 52 51"/><path d="M32 27 C30 36 34 46 46 50"/><path d="M28 49.5 H68 M30 56.4 H64"/><path d="M44.3 30 V84 M50.4 32 V80"/><ellipse cx="42.5" cy="82.5" rx="11.5" ry="7" transform="rotate(-10 42.5 82.5)"/><path d="M41 86 C43 96 43 104 42 112"/><path d="M66 30 C80 22 94 24 108 28"/><path d="M56 60 C62 66 62 74 54 76"/></g></g></svg>
<span class="t" style="left:0;width:627px;text-align:center;top:56.5px;font-size:41.4px;color:#8e5040;letter-spacing:1.75px;line-height:1">A model of Memory</span>
<span class="t" style="left:56.00px;top:244.44px;font-size:15px;color:#4a4640;font-weight:normal;font-family:'Liberation Serif',sans-serif;font-style:italic;">Sensory Input</span>
<span class="t" style="left:214.80px;top:255.54px;font-size:15px;color:#4a4640;font-weight:normal;font-family:'Liberation Serif',sans-serif;font-style:italic;">Attention</span>
<span class="t" style="left:304.60px;top:198.04px;font-size:15px;color:#4a4640;font-weight:normal;font-family:'Liberation Serif',sans-serif;font-style:italic;">Rehearsal</span>
<span class="t" style="left:389.50px;top:243.94px;font-size:15px;color:#4a4640;font-weight:normal;font-family:'Liberation Serif',sans-serif;font-style:italic;">Storage</span>
<span class="t" style="left:402.90px;top:300.74px;font-size:15px;color:#4a4640;font-weight:normal;font-family:'Liberation Serif',sans-serif;font-style:italic;">Retrieval</span>
<svg style="position:absolute;left:0px;top:0px;" width="627" height="470" viewBox="0 0 627 470"><polygon fill="#0a0a0a" points="56.5,281.1 123.3,281.1 123.3,285.9 137.3,278.7 123.3,271.4 123.3,276.3 56.5,276.3"/><polygon fill="#0a0a0a" points="211.3,281.7 271.4,281.7 271.4,286.6 285.4,279.3 271.4,272.1 271.4,276.9 211.3,276.9"/><polygon fill="#0a0a0a" points="377.5,264.8 442.5,264.8 442.5,269.6 456.5,262.4 442.5,255.1 442.5,260.0 377.5,260.0"/><polygon fill="#0a0a0a" points="458.7,295.7 399.9,295.7 399.9,290.9 385.9,298.1 399.9,305.4 399.9,300.5 458.7,300.5"/><polygon fill="#0a0a0a" points="325.5,215.8 319.8,229.8 316.5,228.4 317.5,241.8 327.6,233.0 324.4,231.7 330.1,217.8"/><polygon fill="#0a0a0a" points="360.4,241.1 354.1,228.3 357.3,226.7 346.6,218.6 346.5,232.0 349.6,230.5 356.0,243.3"/></svg>
<div style="left:148.5px;top:249.3px;width:60.5px;height:61px;background:#4a0290;border-radius:8px"></div>
<div style="left:294.79999999999995px;top:242.2px;width:79px;height:74px;background:#fa9a12;border-radius:2px"></div>
<div style="left:461.79999999999995px;top:233px;width:98px;height:93px;background:#038402;border-radius:9px"></div>
<span class="t" style="left:155.00px;top:267.69px;font-size:11px;color:#fff;font-weight:bold;font-family:'Liberation Sans',sans-serif;font-style:normal;letter-spacing:0.700px;">Sensory</span>
<span class="t" style="left:155.10px;top:280.59px;font-size:11px;color:#fff;font-weight:bold;font-family:'Liberation Sans',sans-serif;font-style:normal;letter-spacing:0.940px;">memory</span>
<span class="t" style="left:302.50px;top:268.29px;font-size:11px;color:#fff;font-weight:bold;font-family:'Liberation Sans',sans-serif;font-style:normal;letter-spacing:0.589px;text-shadow:1px 1px 0 #2a2010;">Short-term</span>
<span class="t" style="left:310.90px;top:281.29px;font-size:11px;color:#fff;font-weight:bold;font-family:'Liberation Sans',sans-serif;font-style:normal;letter-spacing:0.900px;text-shadow:1px 1px 0 #2a2010;">memory</span>
<span class="t" style="left:480.50px;top:267.69px;font-size:11px;color:#fff;font-weight:bold;font-family:'Liberation Sans',sans-serif;font-style:normal;letter-spacing:0.562px;text-shadow:1px 1px 0 #2a2010;">Long-term</span>
<span class="t" style="left:486.60px;top:280.39px;font-size:11px;color:#fff;font-weight:bold;font-family:'Liberation Sans',sans-serif;font-style:normal;letter-spacing:1.080px;text-shadow:1px 1px 0 #2a2010;">memory</span>
</div>
<span class="t" style="left:28.50px;top:267.94px;font-size:12px;color:#1e3a56;font-weight:bold;font-family:'Liberation Sans',sans-serif;font-style:normal;">11</span>
<div style="left:46.5px;top:391.09999999999997px;width:135.5px;height:102.3px;background:#8e8882;box-shadow:1px 1px 1px rgba(0,0,0,.25)"></div>
<div style="left:48px;top:392.4px;width:627px;height:470px;transform:scale(0.2121);transform-origin:0 0;">
<div style="left:0px;top:0px;width:627px;height:470px;background:#5e4828;background-image:radial-gradient(ellipse 3px 4px at 30% 40%, rgba(130,105,70,.28), transparent),radial-gradient(ellipse 4px 3px at 70% 70%, rgba(35,24,8,.22), transparent),radial-gradient(circle 2px at 50% 50%, rgba(140,115,80,.2), transparent);background-size:10px 12px,13px 11px,7px 7px;"></div>
<div style="left:13px;top:13px;width:601px;height:444px;background:#4a361a;border-radius:2px"></div>
<div style="left:14px;top:14px;width:599px;height:442px;background:#e2d28e;border-radius:1px"></div>
<div style="left:17.5px;top:17.5px;width:592px;height:435px;background:#f3e8b6;box-shadow:inset 0 0 5px 2px rgba(225,205,125,.8)"></div>
<div style="left:29px;top:29px;width:569px;height:411px;background:#f3f3f2;border:1px solid rgba(215,205,160,.9);box-shadow:inset 0 0 36px 8px rgba(243,232,170,.85)"></div>
<div style="left:29px;top:122.5px;width:569px;height:2px;background:#d9d6c0"></div>
<svg style="position:absolute;left:0px;top:0px;" width="627" height="470" viewBox="0 0 627 470"><g fill="none" stroke="#c8c3b3" stroke-width="1"><ellipse cx="76" cy="42" rx="9" ry="12.5" transform="rotate(12 76 42)"/><path d="M30 30 C38 22 54 22 60 32 C64 40 60 50 52 51"/><path d="M32 27 C30 36 34 46 46 50"/><path d="M28 49.5 H68 M30 56.4 H64"/><path d="M44.3 30 V84 M50.4 32 V80"/><ellipse cx="42.5" cy="82.5" rx="11.5" ry="7" transform="rotate(-10 42.5 82.5)"/><path d="M41 86 C43 96 43 104 42 112"/><path d="M66 30 C80 22 94 24 108 28"/><path d="M56 60 C62 66 62 74 54 76"/></g><g transform="translate(627,0) scale(-1,1)"><g fill="none" stroke="#c8c3b3" stroke-width="1"><ellipse cx="76" cy="42" rx="9" ry="12.5" transform="rotate(12 76 42)"/><path d="M30 30 C38 22 54 22 60 32 C64 40 60 50 52 51"/><path d="M32 27 C30 36 34 46 46 50"/><path d="M28 49.5 H68 M30 56.4 H64"/><path d="M44.3 30 V84 M50.4 32 V80"/><ellipse cx="42.5" cy="82.5" rx="11.5" ry="7" transform="rotate(-10 42.5 82.5)"/><path d="M41 86 C43 96 43 104 42 112"/><path d="M66 30 C80 22 94 24 108 28"/><path d="M56 60 C62 66 62 74 54 76"/></g></g></svg>
<span class="t" style="left:0;width:627px;text-align:center;display:none"></span>
<span class="t" style="left:132.50px;top:53.14px;font-size:40px;color:#7a625a;font-weight:normal;font-family:'Liberation Sans',sans-serif;font-style:normal;letter-spacing:0.538px;">Short-Term Memory</span>
<div style="left:60px;top:203px;width:8px;height:8px;background:#5a4a38"></div>
<span class="t" style="left:80.00px;top:196.38px;font-size:22px;color:#1a120a;font-weight:bold;font-family:'Liberation Sans',sans-serif;font-style:normal;letter-spacing:-1.859px;">Temporary storage for info you're currently attending to.</span>
<div style="left:60px;top:249px;width:8px;height:8px;background:#5a4a38"></div>
<span class="t" style="left:80.00px;top:242.38px;font-size:22px;color:#1a120a;font-weight:bold;font-family:'Liberation Sans',sans-serif;font-style:normal;letter-spacing:-1.342px;">AKA Working Memory :</span>
<div style="left:60px;top:291px;width:8px;height:8px;background:#5a4a38"></div>
<span class="t" style="left:80.00px;top:284.38px;font-size:22px;color:#1a120a;font-weight:bold;font-family:'Liberation Sans',sans-serif;font-style:normal;letter-spacing:-1.474px;">We can keep things in Short-term memory for ~20</span>
<span class="t" style="left:85.00px;top:314.38px;font-size:22px;color:#1a120a;font-weight:bold;font-family:'Liberation Sans',sans-serif;font-style:normal;letter-spacing:-0.995px;">seconds - if the stimulus is rehearsed.</span>
</div>
<span class="t" style="left:29.00px;top:390.17px;font-size:11.5px;color:#6a6a6a;font-weight:normal;font-family:'Liberation Sans',sans-serif;font-style:normal;">12</span>
<div style="left:46.5px;top:513.3000000000001px;width:135.5px;height:102.3px;background:#8e8882;box-shadow:1px 1px 1px rgba(0,0,0,.25)"></div>
<div style="left:48px;top:514.6px;width:627px;height:470px;transform:scale(0.2121);transform-origin:0 0;">
<div style="left:0px;top:0px;width:627px;height:470px;background:#5e4828;background-image:radial-gradient(ellipse 3px 4px at 30% 40%, rgba(130,105,70,.28), transparent),radial-gradient(ellipse 4px 3px at 70% 70%, rgba(35,24,8,.22), transparent),radial-gradient(circle 2px at 50% 50%, rgba(140,115,80,.2), transparent);background-size:10px 12px,13px 11px,7px 7px;"></div>
<div style="left:13px;top:13px;width:601px;height:444px;background:#4a361a;border-radius:2px"></div>
<div style="left:14px;top:14px;width:599px;height:442px;background:#e2d28e;border-radius:1px"></div>
<div style="left:17.5px;top:17.5px;width:592px;height:435px;background:#f3e8b6;box-shadow:inset 0 0 5px 2px rgba(225,205,125,.8)"></div>
<div style="left:29px;top:29px;width:569px;height:411px;background:#f3f3f2;border:1px solid rgba(215,205,160,.9);box-shadow:inset 0 0 36px 8px rgba(243,232,170,.85)"></div>
<div style="left:29px;top:122.5px;width:569px;height:2px;background:#d9d6c0"></div>
<svg style="position:absolute;left:0px;top:0px;" width="627" height="470" viewBox="0 0 627 470"><g fill="none" stroke="#c8c3b3" stroke-width="1"><ellipse cx="76" cy="42" rx="9" ry="12.5" transform="rotate(12 76 42)"/><path d="M30 30 C38 22 54 22 60 32 C64 40 60 50 52 51"/><path d="M32 27 C30 36 34 46 46 50"/><path d="M28 49.5 H68 M30 56.4 H64"/><path d="M44.3 30 V84 M50.4 32 V80"/><ellipse cx="42.5" cy="82.5" rx="11.5" ry="7" transform="rotate(-10 42.5 82.5)"/><path d="M41 86 C43 96 43 104 42 112"/><path d="M66 30 C80 22 94 24 108 28"/><path d="M56 60 C62 66 62 74 54 76"/></g><g transform="translate(627,0) scale(-1,1)"><g fill="none" stroke="#c8c3b3" stroke-width="1"><ellipse cx="76" cy="42" rx="9" ry="12.5" transform="rotate(12 76 42)"/><path d="M30 30 C38 22 54 22 60 32 C64 40 60 50 52 51"/><path d="M32 27 C30 36 34 46 46 50"/><path d="M28 49.5 H68 M30 56.4 H64"/><path d="M44.3 30 V84 M50.4 32 V80"/><ellipse cx="42.5" cy="82.5" rx="11.5" ry="7" transform="rotate(-10 42.5 82.5)"/><path d="M41 86 C43 96 43 104 42 112"/><path d="M66 30 C80 22 94 24 108 28"/><path d="M56 60 C62 66 62 74 54 76"/></g></g></svg>
<span class="t" style="left:0;width:627px;text-align:center;display:none"></span>
<span class="t" style="left:131.00px;top:53.14px;font-size:40px;color:#7a625a;font-weight:normal;font-family:'Liberation Sans',sans-serif;font-style:normal;letter-spacing:0.725px;">Short-Term memory</span>
<div style="left:59px;top:162px;width:8px;height:8px;background:#5a4a38"></div>
<span class="t" style="left:79.00px;top:155.38px;font-size:22px;color:#1a120a;font-weight:bold;font-family:'Liberation Sans',sans-serif;font-style:normal;letter-spacing:-1.741px;">What is your Short-term memory capacity?</span>
<div style="left:59px;top:203px;width:8px;height:8px;background:#5a4a38"></div>
<span class="t" style="left:79.00px;top:196.38px;font-size:22px;color:#1a120a;font-weight:bold;font-family:'Liberation Sans',sans-serif;font-style:normal;letter-spacing:1.823px;">Remember this:</span>
<div style="left:112px;top:246px;width:8px;height:8px;background:#5a4a38"></div>
<span class="t" style="left:132.00px;top:239.38px;font-size:22px;color:#1a120a;font-weight:bold;font-family:'Liberation Sans',sans-serif;font-style:normal;letter-spacing:0.308px;">6 3 9 2 4 6 8</span>
<div style="left:112px;top:292px;width:8px;height:8px;background:#5a4a38"></div>
<span class="t" style="left:132.00px;top:285.38px;font-size:22px;color:#1a120a;font-weight:bold;font-family:'Liberation Sans',sans-serif;font-style:normal;letter-spacing:-1.078px;">5 8 1 3 9 0 6 4 2 1</span>
<div style="left:59px;top:341px;width:8px;height:8px;background:#5a4a38"></div>
<span class="t" style="left:79.00px;top:334.38px;font-size:22px;color:#1a120a;font-weight:bold;font-family:'Liberation Sans',sans-serif;font-style:normal;letter-spacing:-1.361px;">We can store 7 numbers (plus or minus 2) - The Magic</span>
<span class="t" style="left:85.00px;top:361.38px;font-size:22px;color:#1a120a;font-weight:bold;font-family:'Liberation Sans',sans-serif;font-style:normal;letter-spacing:-3.009px;">Number Seven</span>
</div>
<span class="t" style="left:29.00px;top:512.37px;font-size:11.5px;color:#6a6a6a;font-weight:normal;font-family:'Liberation Sans',sans-serif;font-style:normal;">13</span>
<div style="left:46.5px;top:635.5px;width:135.5px;height:102.3px;background:#8e8882;box-shadow:1px 1px 1px rgba(0,0,0,.25)"></div>
<div style="left:48px;top:636.8px;width:627px;height:470px;transform:scale(0.2121);transform-origin:0 0;">
<div style="left:0px;top:0px;width:627px;height:470px;background:#5e4828;background-image:radial-gradient(ellipse 3px 4px at 30% 40%, rgba(130,105,70,.28), transparent),radial-gradient(ellipse 4px 3px at 70% 70%, rgba(35,24,8,.22), transparent),radial-gradient(circle 2px at 50% 50%, rgba(140,115,80,.2), transparent);background-size:10px 12px,13px 11px,7px 7px;"></div>
<div style="left:13px;top:13px;width:601px;height:444px;background:#4a361a;border-radius:2px"></div>
<div style="left:14px;top:14px;width:599px;height:442px;background:#e2d28e;border-radius:1px"></div>
<div style="left:17.5px;top:17.5px;width:592px;height:435px;background:#f3e8b6;box-shadow:inset 0 0 5px 2px rgba(225,205,125,.8)"></div>
<div style="left:29px;top:29px;width:569px;height:411px;background:#f3f3f2;border:1px solid rgba(215,205,160,.9);box-shadow:inset 0 0 36px 8px rgba(243,232,170,.85)"></div>
<div style="left:29px;top:122.5px;width:569px;height:2px;background:#d9d6c0"></div>
<svg style="position:absolute;left:0px;top:0px;" width="627" height="470" viewBox="0 0 627 470"><g fill="none" stroke="#c8c3b3" stroke-width="1"><ellipse cx="76" cy="42" rx="9" ry="12.5" transform="rotate(12 76 42)"/><path d="M30 30 C38 22 54 22 60 32 C64 40 60 50 52 51"/><path d="M32 27 C30 36 34 46 46 50"/><path d="M28 49.5 H68 M30 56.4 H64"/><path d="M44.3 30 V84 M50.4 32 V80"/><ellipse cx="42.5" cy="82.5" rx="11.5" ry="7" transform="rotate(-10 42.5 82.5)"/><path d="M41 86 C43 96 43 104 42 112"/><path d="M66 30 C80 22 94 24 108 28"/><path d="M56 60 C62 66 62 74 54 76"/></g><g transform="translate(627,0) scale(-1,1)"><g fill="none" stroke="#c8c3b3" stroke-width="1"><ellipse cx="76" cy="42" rx="9" ry="12.5" transform="rotate(12 76 42)"/><path d="M30 30 C38 22 54 22 60 32 C64 40 60 50 52 51"/><path d="M32 27 C30 36 34 46 46 50"/><path d="M28 49.5 H68 M30 56.4 H64"/><path d="M44.3 30 V84 M50.4 32 V80"/><ellipse cx="42.5" cy="82.5" rx="11.5" ry="7" transform="rotate(-10 42.5 82.5)"/><path d="M41 86 C43 96 43 104 42 112"/><path d="M66 30 C80 22 94 24 108 28"/><path d="M56 60 C62 66 62 74 54 76"/></g></g></svg>
<span class="t" style="left:0;width:627px;text-align:center;display:none"></span>
<span class="t" style="left:130.00px;top:53.14px;font-size:40px;color:#7a625a;font-weight:normal;font-family:'Liberation Sans',sans-serif;font-style:normal;letter-spacing:1.347px;">Long-Term Memory</span>
<div style="left:59px;top:234px;width:8px;height:8px;background:#5a4a38"></div>
<span class="t" style="left:79.00px;top:227.38px;font-size:22px;color:#1a120a;font-weight:bold;font-family:'Liberation Sans',sans-serif;font-style:normal;letter-spacing:-1.651px;">Stores all the information you've seen in a somewhat</span>
<span class="t" style="left:85.00px;top:252.38px;font-size:22px;color:#1a120a;font-weight:bold;font-family:'Liberation Sans',sans-serif;font-style:normal;letter-spacing:1.485px;">permanent way.</span>
</div>
<span class="t" style="left:29.00px;top:634.57px;font-size:11.5px;color:#6a6a6a;font-weight:normal;font-family:'Liberation Sans',sans-serif;font-style:normal;">14</span>
</div>
<svg style="position:absolute;left:25px;top:480px;" width="15" height="10" viewBox="0 0 15 10"><path d="M9 1L14 5L9 9L4 5Z" fill="#6a6ab8" stroke="#3a3a80" stroke-width="0.8"/><path d="M1 4H5M2 6H5M1 8H4" stroke="#9a9acc" stroke-width="0.8"/></svg>
<div style="left:215px;top:117px;width:1px;height:604px;background:#d0d0d0"></div>
<div style="left:216px;top:117px;width:7px;height:604px;background:#f7f7f7"></div>
<div style="left:223px;top:117px;width:1px;height:604px;background:#a0a0a0"></div>
<div style="left:224px;top:117px;width:665px;height:604px;background:#f0f0f0"></div>
<div style="left:229.3px;top:121px;width:50.0px;height:23.5px;background:#fff;border:1px solid #c4c4c4;border-bottom:none"></div>
<span class="t" style="left:231.60px;top:126.84px;font-size:12px;color:#000;font-weight:bold;font-family:'Liberation Sans',sans-serif;font-style:normal;letter-spacing:-0.140px;">Normal</span>
<div style="left:279.3px;top:123.4px;width:44.69999999999999px;height:21px;background:linear-gradient(#f2f2f2,#e6e6e6);border-top:1px solid #c8c8c8;border-right:1px solid #c8c8c8;border-left:1.5px solid #a8a8a8"></div>
<span class="t" style="left:281.10px;top:127.84px;font-size:12px;color:#000;font-weight:normal;font-family:'Liberation Sans',sans-serif;font-style:normal;letter-spacing:0.100px;">Outline</span>
<div style="left:324px;top:123.4px;width:39.19999999999999px;height:21px;background:linear-gradient(#f2f2f2,#e6e6e6);border-top:1px solid #c8c8c8;border-right:1px solid #c8c8c8;border-left:1.5px solid #a8a8a8"></div>
<span class="t" style="left:328.00px;top:127.84px;font-size:12px;color:#000;font-weight:normal;font-family:'Liberation Sans',sans-serif;font-style:normal;letter-spacing:-0.175px;">Notes</span>
<div style="left:363.2px;top:123.4px;width:54.60000000000002px;height:21px;background:linear-gradient(#f2f2f2,#e6e6e6);border-top:1px solid #c8c8c8;border-right:1px solid #c8c8c8;border-left:1.5px solid #a8a8a8"></div>
<span class="t" style="left:366.30px;top:127.84px;font-size:12px;color:#000;font-weight:normal;font-family:'Liberation Sans',sans-serif;font-style:normal;letter-spacing:0.200px;">Handout</span>
<div style="left:417.8px;top:123.4px;width:71.69999999999999px;height:21px;background:linear-gradient(#f2f2f2,#e6e6e6);border-top:1px solid #c8c8c8;border-right:1px solid #c8c8c8;border-left:1.5px solid #a8a8a8"></div>
<span class="t" style="left:423.60px;top:127.84px;font-size:12px;color:#000;font-weight:normal;font-family:'Liberation Sans',sans-serif;font-style:normal;letter-spacing:-0.409px;">Slide Sorter</span>
<div style="left:224px;top:144px;width:647px;height:2px;background:#d8d8d8"></div>
<div style="left:224px;top:146px;width:647px;height:558px;background:#aaaaaa"></div>
<div style="left:871px;top:146px;width:18px;height:558px;background:#f0f0f0"></div>
<div style="left:871.5px;top:270px;width:16px;height:310px;background:#cdcdcd"></div>
<svg style="position:absolute;left:874px;top:151px;" width="12" height="8" viewBox="0 0 12 8"><path d="M2.5 6.2L6 2.7L9.5 6.2" fill="none" stroke="#4a4a4a" stroke-width="2.2"/></svg>
<svg style="position:absolute;left:874px;top:691px;" width="12" height="8" viewBox="0 0 12 8"><path d="M2.5 1.8L6 5.3L9.5 1.8" fill="none" stroke="#4a4a4a" stroke-width="2.2"/></svg>
<div style="left:224px;top:704px;width:647px;height:17px;background:#f0f0f0"></div>
<div style="left:442px;top:706px;width:210px;height:14px;background:#cdcdcd"></div>
<svg style="position:absolute;left:228px;top:707px;" width="8" height="12" viewBox="0 0 8 12"><path d="M6.2 2.5L2.7 6L6.2 9.5" fill="none" stroke="#4a4a4a" stroke-width="2.2"/></svg>
<svg style="position:absolute;left:858px;top:707px;" width="8" height="12" viewBox="0 0 8 12"><path d="M1.8 2.5L5.3 6L1.8 9.5" fill="none" stroke="#4a4a4a" stroke-width="2.2"/></svg>
<div style="left:234px;top:190px;width:627px;height:470px;transform:scale(1);transform-origin:0 0;">
<div style="left:0px;top:0px;width:627px;height:470px;background:#5e4828;background-image:radial-gradient(ellipse 3px 4px at 30% 40%, rgba(130,105,70,.28), transparent),radial-gradient(ellipse 4px 3px at 70% 70%, rgba(35,24,8,.22), transparent),radial-gradient(circle 2px at 50% 50%, rgba(140,115,80,.2), transparent);background-size:10px 12px,13px 11px,7px 7px;box-shadow:2px 2px 4px 1px rgba(0,0,0,.32);"></div>
<div style="left:13px;top:13px;width:601px;height:444px;background:#4a361a;border-radius:2px"></div>
<div style="left:14px;top:14px;width:599px;height:442px;background:#e2d28e;border-radius:1px"></div>
<div style="left:17.5px;top:17.5px;width:592px;height:435px;background:#f3e8b6;box-shadow:inset 0 0 5px 2px rgba(225,205,125,.8)"></div>
<div style="left:29px;top:29px;width:569px;height:411px;background:#f3f3f2;border:1px solid rgba(215,205,160,.9);box-shadow:inset 0 0 36px 8px rgba(243,232,170,.85)"></div>
<div style="left:29px;top:122.5px;width:569px;height:2px;background:#d9d6c0"></div>
<svg style="position:absolute;left:0px;top:0px;" width="627" height="470" viewBox="0 0 627 470"><g fill="none" stroke="#c8c3b3" stroke-width="1"><ellipse cx="76" cy="42" rx="9" ry="12.5" transform="rotate(12 76 42)"/><path d="M30 30 C38 22 54 22 60 32 C64 40 60 50 52 51"/><path d="M32 27 C30 36 34 46 46 50"/><path d="M28 49.5 H68 M30 56.4 H64"/><path d="M44.3 30 V84 M50.4 32 V80"/><ellipse cx="42.5" cy="82.5" rx="11.5" ry="7" transform="rotate(-10 42.5 82.5)"/><path d="M41 86 C43 96 43 104 42 112"/><path d="M66 30 C80 22 94 24 108 28"/><path d="M56 60 C62 66 62 74 54 76"/></g><g transform="translate(627,0) scale(-1,1)"><g fill="none" stroke="#c8c3b3" stroke-width="1"><ellipse cx="76" cy="42" rx="9" ry="12.5" transform="rotate(12 76 42)"/><path d="M30 30 C38 22 54 22 60 32 C64 40 60 50 52 51"/><path d="M32 27 C30 36 34 46 46 50"/><path d="M28 49.5 H68 M30 56.4 H64"/><path d="M44.3 30 V84 M50.4 32 V80"/><ellipse cx="42.5" cy="82.5" rx="11.5" ry="7" transform="rotate(-10 42.5 82.5)"/><path d="M41 86 C43 96 43 104 42 112"/><path d="M66 30 C80 22 94 24 108 28"/><path d="M56 60 C62 66 62 74 54 76"/></g></g></svg>
<span class="t" style="left:0;width:627px;text-align:center;top:56.5px;font-size:41.4px;color:#8e5040;letter-spacing:1.75px;line-height:1">A model of Memory</span>
<span class="t" style="left:56.00px;top:244.44px;font-size:15px;color:#4a4640;font-weight:normal;font-family:'Liberation Serif',sans-serif;font-style:italic;">Sensory Input</span>
<span class="t" style="left:214.80px;top:255.54px;font-size:15px;color:#4a4640;font-weight:normal;font-family:'Liberation Serif',sans-serif;font-style:italic;">Attention</span>
<span class="t" style="left:304.60px;top:198.04px;font-size:15px;color:#4a4640;font-weight:normal;font-family:'Liberation Serif',sans-serif;font-style:italic;">Rehearsal</span>
<span class="t" style="left:389.50px;top:243.94px;font-size:15px;color:#4a4640;font-weight:normal;font-family:'Liberation Serif',sans-serif;font-style:italic;">Storage</span>
<span class="t" style="left:402.90px;top:300.74px;font-size:15px;color:#4a4640;font-weight:normal;font-family:'Liberation Serif',sans-serif;font-style:italic;">Retrieval</span>
<svg style="position:absolute;left:0px;top:0px;" width="627" height="470" viewBox="0 0 627 470"><polygon fill="#0a0a0a" points="56.5,281.1 123.3,281.1 123.3,285.9 137.3,278.7 123.3,271.4 123.3,276.3 56.5,276.3"/><polygon fill="#0a0a0a" points="211.3,281.7 271.4,281.7 271.4,286.6 285.4,279.3 271.4,272.1 271.4,276.9 211.3,276.9"/><polygon fill="#0a0a0a" points="377.5,264.8 442.5,264.8 442.5,269.6 456.5,262.4 442.5,255.1 442.5,260.0 377.5,260.0"/><polygon fill="#0a0a0a" points="458.7,295.7 399.9,295.7 399.9,290.9 385.9,298.1 399.9,305.4 399.9,300.5 458.7,300.5"/><polygon fill="#0a0a0a" points="325.5,215.8 319.8,229.8 316.5,228.4 317.5,241.8 327.6,233.0 324.4,231.7 330.1,217.8"/><polygon fill="#0a0a0a" points="360.4,241.1 354.1,228.3 357.3,226.7 346.6,218.6 346.5,232.0 349.6,230.5 356.0,243.3"/></svg>
<div style="left:148.5px;top:249.3px;width:60.5px;height:61px;background:#4a0290;border-radius:8px"></div>
<div style="left:294.79999999999995px;top:242.2px;width:79px;height:74px;background:#fa9a12;border-radius:2px"></div>
<div style="left:461.79999999999995px;top:233px;width:98px;height:93px;background:#038402;border-radius:9px"></div>
<span class="t" style="left:155.00px;top:267.69px;font-size:11px;color:#fff;font-weight:bold;font-family:'Liberation Sans',sans-serif;font-style:normal;letter-spacing:0.700px;">Sensory</span>
<span class="t" style="left:155.10px;top:280.59px;font-size:11px;color:#fff;font-weight:bold;font-family:'Liberation Sans',sans-serif;font-style:normal;letter-spacing:0.940px;">memory</span>
<span class="t" style="left:302.50px;top:268.29px;font-size:11px;color:#fff;font-weight:bold;font-family:'Liberation Sans',sans-serif;font-style:normal;letter-spacing:0.589px;text-shadow:1px 1px 0 #2a2010;">Short-term</span>
<span class="t" style="left:310.90px;top:281.29px;font-size:11px;color:#fff;font-weight:bold;font-family:'Liberation Sans',sans-serif;font-style:normal;letter-spacing:0.900px;text-shadow:1px 1px 0 #2a2010;">memory</span>
<span class="t" style="left:480.50px;top:267.69px;font-size:11px;color:#fff;font-weight:bold;font-family:'Liberation Sans',sans-serif;font-style:normal;letter-spacing:0.562px;text-shadow:1px 1px 0 #2a2010;">Long-term</span>
<span class="t" style="left:486.60px;top:280.39px;font-size:11px;color:#fff;font-weight:bold;font-family:'Liberation Sans',sans-serif;font-style:normal;letter-spacing:1.080px;text-shadow:1px 1px 0 #2a2010;">memory</span>
<svg style="position:absolute;left:0px;top:0px;" width="627" height="470" viewBox="0 0 627 470"><circle cx="294.79999999999995" cy="242.2" r="4" fill="#c8e070" stroke="#222" stroke-width="1"/><rect x="290.79999999999995" y="275" width="8" height="8" fill="#5fd4d4" stroke="#1d3d3d" stroke-width="1"/><rect x="290.79999999999995" y="312" width="8" height="8" fill="#5fd4d4" stroke="#1d3d3d" stroke-width="1"/><rect x="330.4" y="238.2" width="8" height="8" fill="#5fd4d4" stroke="#1d3d3d" stroke-width="1"/><rect x="330.4" y="312" width="8" height="8" fill="#5fd4d4" stroke="#1d3d3d" stroke-width="1"/><rect x="370" y="238.2" width="8" height="8" fill="#5fd4d4" stroke="#1d3d3d" stroke-width="1"/><rect x="370" y="275" width="8" height="8" fill="#5fd4d4" stroke="#1d3d3d" stroke-width="1"/><rect x="370" y="312" width="8" height="8" fill="#5fd4d4" stroke="#1d3d3d" stroke-width="1"/></svg>
</div>
<div style="left:889px;top:117px;width:1px;height:604px;background:#d0d0d0"></div>
<div style="left:890px;top:117px;width:6px;height:604px;background:#f7f7f7"></div>
<div style="left:896px;top:117px;width:1px;height:604px;background:#a0a0a0"></div>
<svg style="position:absolute;left:217.5px;top:398.5px;" width="5" height="39" viewBox="0 0 5 39"><rect x="1.3" y="11.3" width="1.6" height="1.6" fill="#6a6a6a"/><rect x="1.3" y="15.3" width="1.6" height="1.6" fill="#6a6a6a"/><rect x="1.3" y="19.3" width="1.6" height="1.6" fill="#6a6a6a"/><rect x="1.3" y="23.3" width="1.6" height="1.6" fill="#6a6a6a"/><rect x="1.3" y="27.3" width="1.6" height="1.6" fill="#6a6a6a"/><path d="M3.5 3L0.8 5L3.5 7Z" fill="#333"/><path d="M3.5 33.5L0.8 35.5L3.5 37.5Z" fill="#333"/></svg>
<svg style="position:absolute;left:890px;top:398.5px;" width="5" height="39" viewBox="0 0 5 39"><rect x="1.3" y="11.3" width="1.6" height="1.6" fill="#6a6a6a"/><rect x="1.3" y="15.3" width="1.6" height="1.6" fill="#6a6a6a"/><rect x="1.3" y="19.3" width="1.6" height="1.6" fill="#6a6a6a"/><rect x="1.3" y="23.3" width="1.6" height="1.6" fill="#6a6a6a"/><rect x="1.3" y="27.3" width="1.6" height="1.6" fill="#6a6a6a"/><path d="M0.8 3L3.5 5L0.8 7Z" fill="#333"/><path d="M0.8 33.5L3.5 35.5L0.8 37.5Z" fill="#333"/></svg>
<div style="left:897px;top:117px;width:238px;height:604px;background:#f0f0f0"></div>
<div style="left:1134px;top:117px;width:1px;height:604px;background:#d8d8d8"></div>
<div style="left:897px;top:718px;width:238px;height:1px;background:#c8c8c8"></div>
<div style="left:1135px;top:117px;width:40px;height:604px;background:#f0f0f0"></div>
<div style="left:897px;top:120px;width:237px;height:27px;background:linear-gradient(#f6f6f6,#f0f0f0)"></div>
<span class="t" style="left:909.60px;top:129.04px;font-size:12px;color:#000;font-weight:bold;font-family:'Liberation Sans',sans-serif;font-style:normal;letter-spacing:-0.222px;">Properties</span>
<svg style="position:absolute;left:1120px;top:127px;" width="10" height="10" viewBox="0 0 10 10"><path d="M1 1L9 9M9 1L1 9" stroke="#555" stroke-width="1.7"/></svg>
<div style="left:897px;top:147px;width:237px;height:27px;background:linear-gradient(#e6e6e6,#f2f2f2)"></div>
<div style="left:905px;top:156.6px;width:9px;height:9px;background:#fff;border:1px solid #555"></div>
<div style="left:907px;top:160.6px;width:5px;height:1px;background:#111"></div>
<div style="left:909px;top:158.6px;width:1px;height:5px;background:#111"></div>
<span class="t" style="left:919.00px;top:155.44px;font-size:12px;color:#000;font-weight:bold;font-family:'Liberation Sans',sans-serif;font-style:normal;letter-spacing:0.333px;">Text</span>
<svg style="position:absolute;left:1118px;top:153.1px;" width="12" height="11" viewBox="0 0 12 11"><rect x="0.5" y="0.5" width="11" height="10" fill="#fff" stroke="#5a7a9a" stroke-width="1"/><rect x="0.5" y="0.5" width="11" height="2.5" fill="#c0d4e8" stroke="#5a7a9a" stroke-width="1"/><path d="M3 7H4M5.5 7H6.5M8 7H9" stroke="#333" stroke-width="1"/></svg>
<div style="left:897px;top:174px;width:237px;height:27px;background:linear-gradient(#e6e6e6,#f2f2f2)"></div>
<div style="left:905px;top:183.4px;width:9px;height:9px;background:#fff;border:1px solid #555"></div>
<div style="left:907px;top:187.4px;width:5px;height:1px;background:#111"></div>
<div style="left:909px;top:185.4px;width:1px;height:5px;background:#111"></div>
<span class="t" style="left:919.00px;top:182.24px;font-size:12px;color:#000;font-weight:bold;font-family:'Liberation Sans',sans-serif;font-style:normal;letter-spacing:-0.500px;">Paragraph</span>
<svg style="position:absolute;left:1118px;top:179.9px;" width="12" height="11" viewBox="0 0 12 11"><rect x="0.5" y="0.5" width="11" height="10" fill="#fff" stroke="#5a7a9a" stroke-width="1"/><rect x="0.5" y="0.5" width="11" height="2.5" fill="#c0d4e8" stroke="#5a7a9a" stroke-width="1"/><path d="M3 7H4M5.5 7H6.5M8 7H9" stroke="#333" stroke-width="1"/></svg>
<div style="left:897px;top:201px;width:237px;height:27px;background:linear-gradient(#e6e6e6,#f2f2f2)"></div>
<div style="left:905px;top:210.6px;width:9px;height:9px;background:#fff;border:1px solid #555"></div>
<div style="left:907px;top:214.6px;width:5px;height:1px;background:#111"></div>
<span class="t" style="left:919.00px;top:209.44px;font-size:12px;color:#000;font-weight:bold;font-family:'Liberation Sans',sans-serif;font-style:normal;letter-spacing:-0.600px;">Area</span>
<svg style="position:absolute;left:1118px;top:207.1px;" width="12" height="11" viewBox="0 0 12 11"><rect x="0.5" y="0.5" width="11" height="10" fill="#fff" stroke="#5a7a9a" stroke-width="1"/><rect x="0.5" y="0.5" width="11" height="2.5" fill="#c0d4e8" stroke="#5a7a9a" stroke-width="1"/><path d="M3 7H4M5.5 7H6.5M8 7H9" stroke="#333" stroke-width="1"/></svg>
<div style="left:897px;top:228px;width:237px;height:107px;background:#f0f0f0"></div>
<span class="t" style="left:906.20px;top:232.04px;font-size:12px;color:#000;font-weight:normal;font-family:'Liberation Sans',sans-serif;font-style:normal;letter-spacing:-0.275px;">Fill:</span>
<div style="left:906.2px;top:243.2px;width:6.898529411764707px;height:1px;background:#000"></div>
<div style="left:906.2px;top:251.4px;width:107.5px;height:22.299999999999983px;background:#fff;border:1px solid #a0a0a0"></div>
<div style="left:995.7px;top:252.4px;width:17.0px;height:20.299999999999983px;background:linear-gradient(#f4f4f4,#e2e2e2);border:1px solid #b0b0b0"></div>
<svg style="position:absolute;left:999.7px;top:259.55px;" width="9" height="7" viewBox="0 0 9 7"><path d="M1 1.5L4.5 5L8 1.5" fill="none" stroke="#4a4a4a" stroke-width="2"/></svg>
<span class="t" style="left:908.80px;top:256.69px;font-size:12px;color:#000;font-weight:normal;font-family:'Liberation Sans',sans-serif;font-style:normal;letter-spacing:-0.225px;">Color</span>
<div style="left:1020.8px;top:249px;width:98.4px;height:25.7px;background:linear-gradient(#fafafa,#f2f2f2);border:1px solid #e6e6e6"></div>
<svg style="position:absolute;left:1028px;top:255px;" width="15" height="14" viewBox="0 0 15 14"><path d="M1.5 6.5L6.5 1.5L12.5 7.5L7.5 12.5Z" fill="#a8cdf0" stroke="#223850" stroke-width="1.1"/><path d="M3 6L6.5 2.5L8 4L4.5 7.5Z" fill="#e8f4fc"/><path d="M6 1C5 0 3.5 0.5 4 2.5" fill="none" stroke="#223850" stroke-width="1"/><path d="M12 7.5Q14.5 10 13.5 12.5" fill="none" stroke="#223850" stroke-width="1.2"/></svg>
<div style="left:1045px;top:256px;width:56px;height:11.6px;background:#f4961a;border:1px solid #2a3a50;box-shadow:inset 0 0 0 1px #f8e0c0"></div>
<svg style="position:absolute;left:1108.7px;top:260px;" width="6" height="4" viewBox="0 0 6 4"><path d="M0 0.5H6L3 3.5Z" fill="#000"/></svg>
<span class="t" style="left:906.20px;top:283.84px;font-size:12px;color:#000;font-weight:normal;font-family:'Liberation Sans',sans-serif;font-style:normal;letter-spacing:-0.225px;">Transparency:</span>
<div style="left:906.2px;top:295px;width:7.070314547837484px;height:1px;background:#000"></div>
<div style="left:906.2px;top:303.7px;width:107.5px;height:21.69999999999999px;background:#fff;border:1px solid #a0a0a0"></div>
<div style="left:995.7px;top:304.7px;width:17.0px;height:19.69999999999999px;background:linear-gradient(#f4f4f4,#e2e2e2);border:1px solid #b0b0b0"></div>
<svg style="position:absolute;left:999.7px;top:311.54999999999995px;" width="9" height="7" viewBox="0 0 9 7"><path d="M1 1.5L4.5 5L8 1.5" fill="none" stroke="#4a4a4a" stroke-width="2"/></svg>
<span class="t" style="left:908.80px;top:308.69px;font-size:12px;color:#000;font-weight:normal;font-family:'Liberation Sans',sans-serif;font-style:normal;letter-spacing:-0.300px;">None</span>
<div style="left:1020.4px;top:303.7px;width:107.30000000000007px;height:21.69999999999999px;background:#fff;border:1px solid #a8a8a8"></div>
<div style="left:1110.7px;top:305.7px;width:14px;height:8.849999999999966px;background:linear-gradient(#f6f6f6,#e6e6e6);border:1px solid #c0c0c0"></div>
<div style="left:1110.7px;top:314.54999999999995px;width:14px;height:8.850000000000023px;background:linear-gradient(#f6f6f6,#e6e6e6);border:1px solid #c0c0c0"></div>
<svg style="position:absolute;left:1114.2px;top:307.54999999999995px;" width="7" height="5" viewBox="0 0 7 5"><path d="M0.5 4L3.5 0.8L6.5 4Z" fill="#222"/></svg>
<svg style="position:absolute;left:1114.2px;top:316.54999999999995px;" width="7" height="5" viewBox="0 0 7 5"><path d="M0.5 1L3.5 4.2L6.5 1Z" fill="#222"/></svg>
<span class="t" style="left:1023.80px;top:308.69px;font-size:12px;color:#000;font-weight:normal;font-family:'Liberation Sans',sans-serif;font-style:normal;letter-spacing:-2.100px;">0%</span>
<div style="left:897px;top:335px;width:237px;height:27px;background:linear-gradient(#e6e6e6,#f2f2f2)"></div>
<div style="left:905px;top:345px;width:9px;height:9px;background:#fff;border:1px solid #555"></div>
<div style="left:907px;top:349px;width:5px;height:1px;background:#111"></div>
<span class="t" style="left:919.00px;top:343.84px;font-size:12px;color:#000;font-weight:bold;font-family:'Liberation Sans',sans-serif;font-style:normal;letter-spacing:-1.033px;">Line</span>
<svg style="position:absolute;left:1118px;top:341.5px;" width="12" height="11" viewBox="0 0 12 11"><rect x="0.5" y="0.5" width="11" height="10" fill="#fff" stroke="#5a7a9a" stroke-width="1"/><rect x="0.5" y="0.5" width="11" height="2.5" fill="#c0d4e8" stroke="#5a7a9a" stroke-width="1"/><path d="M3 7H4M5.5 7H6.5M8 7H9" stroke="#333" stroke-width="1"/></svg>
<div style="left:897px;top:362px;width:237px;height:216px;background:#f0f0f0"></div>
<span class="t" style="left:906.20px;top:365.44px;font-size:12px;color:#000;font-weight:normal;font-family:'Liberation Sans',sans-serif;font-style:normal;letter-spacing:0.080px;">Width:</span>
<div style="left:906.2px;top:376.6px;width:11.459816176470587px;height:1px;background:#000"></div>
<span class="t" style="left:1020.80px;top:365.44px;font-size:12px;color:#000;font-weight:normal;font-family:'Liberation Sans',sans-serif;font-style:normal;letter-spacing:-0.240px;">Color:</span>
<div style="left:1020.8px;top:376.6px;width:8.3406640625px;height:1px;background:#000"></div>
<div style="left:906.8px;top:381.7px;width:98.8px;height:25.4px;background:linear-gradient(#fafafa,#f2f2f2);border:1px solid #e6e6e6"></div>
<div style="left:911px;top:393px;width:76px;height:1.3px;background:#000"></div>
<svg style="position:absolute;left:994.5px;top:392px;" width="6" height="4" viewBox="0 0 6 4"><path d="M0 0.5H6L3 3.5Z" fill="#000"/></svg>
<div style="left:1020.8px;top:381.7px;width:98.4px;height:25.4px;background:linear-gradient(#fafafa,#f2f2f2);border:1px solid #e6e6e6"></div>
<svg style="position:absolute;left:1025px;top:386px;" width="16" height="14" viewBox="0 0 16 14"><path d="M1 11L10 2L12.5 4.5L3.5 13.5L0.5 13.5Z" fill="#f0c848" stroke="#7a5a10" stroke-width=".8"/><path d="M9 13.5H15.5" stroke="#2a4a8a" stroke-width="1.5"/></svg>
<div style="left:1045px;top:388.2px;width:56px;height:11.2px;background:#808080;border:1px solid #5a5a5a;box-shadow:inset 0 0 0 1px #ddd"></div>
<svg style="position:absolute;left:1108.7px;top:392px;" width="6" height="4" viewBox="0 0 6 4"><path d="M0 0.5H6L3 3.5Z" fill="#000"/></svg>
<span class="t" style="left:906.20px;top:419.64px;font-size:12px;color:#000;font-weight:normal;font-family:'Liberation Sans',sans-serif;font-style:normal;letter-spacing:-0.540px;">Style:</span>
<div style="left:906.2px;top:430.8px;width:7.284265625px;height:1px;background:#000"></div>
<span class="t" style="left:1020.80px;top:419.64px;font-size:12px;color:#000;font-weight:normal;font-family:'Liberation Sans',sans-serif;font-style:normal;letter-spacing:-0.308px;">Transparency:</span>
<div style="left:1020.8px;top:430.8px;width:6.974250491480997px;height:1px;background:#000"></div>
<div style="left:906.2px;top:437.1px;width:107.5px;height:22.69999999999999px;background:#fff;border:1px solid #a0a0a0"></div>
<div style="left:995.7px;top:438.1px;width:17.0px;height:20.69999999999999px;background:linear-gradient(#f4f4f4,#e2e2e2);border:1px solid #b0b0b0"></div>
<svg style="position:absolute;left:999.7px;top:445.45000000000005px;" width="9" height="7" viewBox="0 0 9 7"><path d="M1 1.5L4.5 5L8 1.5" fill="none" stroke="#4a4a4a" stroke-width="2"/></svg>
<span class="t" style="left:908.80px;top:442.59px;font-size:12px;color:#000;font-weight:normal;font-family:'Liberation Sans',sans-serif;font-style:normal;letter-spacing:-0.057px;">- none -</span>
<div style="left:1020.4px;top:437.1px;width:107.30000000000007px;height:22.69999999999999px;background:#fff;border:1px solid #a8a8a8"></div>
<div style="left:1110.7px;top:439.1px;width:14px;height:9.350000000000023px;background:linear-gradient(#f6f6f6,#e6e6e6);border:1px solid #c0c0c0"></div>
<div style="left:1110.7px;top:448.45000000000005px;width:14px;height:9.349999999999966px;background:linear-gradient(#f6f6f6,#e6e6e6);border:1px solid #c0c0c0"></div>
<svg style="position:absolute;left:1114.2px;top:441.45000000000005px;" width="7" height="5" viewBox="0 0 7 5"><path d="M0.5 4L3.5 0.8L6.5 4Z" fill="#222"/></svg>
<svg style="position:absolute;left:1114.2px;top:450.45000000000005px;" width="7" height="5" viewBox="0 0 7 5"><path d="M0.5 1L3.5 4.2L6.5 1Z" fill="#222"/></svg>
<span class="t" style="left:1023.80px;top:442.59px;font-size:12px;color:#000;font-weight:normal;font-family:'Liberation Sans',sans-serif;font-style:normal;letter-spacing:-2.100px;">0%</span>
<span class="t" style="left:906.20px;top:474.54px;font-size:12px;color:#000;font-weight:normal;font-family:'Liberation Sans',sans-serif;font-style:normal;letter-spacing:-0.060px;">Arrow:</span>
<div style="left:906.2px;top:485.7px;width:7.935482708933716px;height:1px;background:#000"></div>
<div style="left:906.2px;top:491.4px;width:107.5px;height:22.300000000000068px;background:#fff;border:1px solid #a0a0a0"></div>
<div style="left:995.7px;top:492.4px;width:17.0px;height:20.300000000000068px;background:linear-gradient(#f4f4f4,#e2e2e2);border:1px solid #b0b0b0"></div>
<svg style="position:absolute;left:999.7px;top:499.55px;" width="9" height="7" viewBox="0 0 9 7"><path d="M1 1.5L4.5 5L8 1.5" fill="none" stroke="#4a4a4a" stroke-width="2"/></svg>
<span class="t" style="left:908.80px;top:496.69px;font-size:12px;color:#000;font-weight:normal;font-family:'Liberation Sans',sans-serif;font-style:normal;letter-spacing:-0.057px;">- none -</span>
<div style="left:1020.4px;top:491.4px;width:107.30000000000007px;height:22.300000000000068px;background:#fff;border:1px solid #a0a0a0"></div>
<div style="left:1109.7px;top:492.4px;width:17.0px;height:20.300000000000068px;background:linear-gradient(#f4f4f4,#e2e2e2);border:1px solid #b0b0b0"></div>
<svg style="position:absolute;left:1113.7px;top:499.55px;" width="9" height="7" viewBox="0 0 9 7"><path d="M1 1.5L4.5 5L8 1.5" fill="none" stroke="#4a4a4a" stroke-width="2"/></svg>
<span class="t" style="left:1023.00px;top:496.69px;font-size:12px;color:#000;font-weight:normal;font-family:'Liberation Sans',sans-serif;font-style:normal;letter-spacing:-0.057px;">- none -</span>
<span class="t" style="left:906.20px;top:528.84px;font-size:12px;color:#000;font-weight:normal;font-family:'Liberation Sans',sans-serif;font-style:normal;letter-spacing:-0.227px;">Corner style</span>
<div style="left:906.2px;top:540px;width:8.330786321483773px;height:1px;background:#000"></div>
<span class="t" style="left:1020.80px;top:528.84px;font-size:12px;color:#000;font-weight:normal;font-family:'Liberation Sans',sans-serif;font-style:normal;letter-spacing:-0.425px;">Cap style</span>
<div style="left:1035.0960062499998px;top:540px;width:6.21964375px;height:1px;background:#000"></div>
<div style="left:906.2px;top:546.6px;width:107.5px;height:21.899999999999977px;background:#fff;border:1px solid #a0a0a0"></div>
<div style="left:995.7px;top:547.6px;width:17.0px;height:19.899999999999977px;background:linear-gradient(#f4f4f4,#e2e2e2);border:1px solid #b0b0b0"></div>
<svg style="position:absolute;left:999.7px;top:554.55px;" width="9" height="7" viewBox="0 0 9 7"><path d="M1 1.5L4.5 5L8 1.5" fill="none" stroke="#4a4a4a" stroke-width="2"/></svg>
<span class="t" style="left:908.20px;top:551.69px;font-size:12px;color:#000;font-weight:normal;font-family:'Liberation Sans',sans-serif;font-style:normal;letter-spacing:-0.233px;">Rounded</span>
<div style="left:1020.4px;top:546.6px;width:107.30000000000007px;height:21.899999999999977px;background:#fff;border:1px solid #a0a0a0"></div>
<div style="left:1109.7px;top:547.6px;width:17.0px;height:19.899999999999977px;background:linear-gradient(#f4f4f4,#e2e2e2);border:1px solid #b0b0b0"></div>
<svg style="position:absolute;left:1113.7px;top:554.55px;" width="9" height="7" viewBox="0 0 9 7"><path d="M1 1.5L4.5 5L8 1.5" fill="none" stroke="#4a4a4a" stroke-width="2"/></svg>
<span class="t" style="left:1022.40px;top:551.69px;font-size:12px;color:#000;font-weight:normal;font-family:'Liberation Sans',sans-serif;font-style:normal;letter-spacing:-0.567px;">Flat</span>
<div style="left:897px;top:577.6px;width:237px;height:27.399999999999977px;background:linear-gradient(#e6e6e6,#f2f2f2)"></div>
<div style="left:905px;top:587.9px;width:9px;height:9px;background:#fff;border:1px solid #555"></div>
<div style="left:907px;top:591.9px;width:5px;height:1px;background:#111"></div>
<div style="left:909px;top:589.9px;width:1px;height:5px;background:#111"></div>
<span class="t" style="left:919.00px;top:586.74px;font-size:12px;color:#000;font-weight:bold;font-family:'Liberation Sans',sans-serif;font-style:normal;letter-spacing:-0.456px;">Position and Size</span>
<svg style="position:absolute;left:1118px;top:584.4px;" width="12" height="11" viewBox="0 0 12 11"><rect x="0.5" y="0.5" width="11" height="10" fill="#fff" stroke="#5a7a9a" stroke-width="1"/><rect x="0.5" y="0.5" width="11" height="2.5" fill="#c0d4e8" stroke="#5a7a9a" stroke-width="1"/><path d="M3 7H4M5.5 7H6.5M8 7H9" stroke="#333" stroke-width="1"/></svg>
<div style="left:897px;top:605px;width:237px;height:1px;background:#dcdcdc"></div>
<div style="left:899px;top:606px;width:1px;height:112px;background:#e0e0e0"></div>
<svg style="position:absolute;left:1150px;top:131px;" width="11" height="10" viewBox="0 0 11 10"><path d="M0.5 1H8M0.5 3.5H8M0.5 6H8" stroke="#333" stroke-width="1.2"/><path d="M4.5 7.5H10.5L7.5 10Z" fill="#111"/></svg>
<div style="left:1139.5px;top:159.4px;width:31px;height:31.1px;background:#f6f6f6;border:1px solid #b8b8b8;border-radius:4px"></div>
<svg style="position:absolute;left:1143px;top:162px;" width="24" height="24" viewBox="0 0 24 24"><path d="M12 1.5L21.5 6V17.5L12 22.5L2.5 17.5V6Z" fill="#3ab0e0"/><path d="M12 12L21.5 6V17.5L12 22.5Z" fill="#7ad040"/><path d="M2.5 6L12 1.5L21.5 6L12 11Z" fill="#6ad0f0"/><path d="M7 3.8L16.5 8.5M17 3.8L7.5 8.5M2.5 11.8L12 17M12 17L21.5 11.8M7 8.7V20M17 8.7V20M12 11V22.5" stroke="#fff" stroke-width="1" opacity=".85"/><ellipse cx="12" cy="23" rx="8" ry="1.2" fill="#000" opacity=".15"/></svg>
<svg style="position:absolute;left:1143px;top:197px;" width="24" height="24" viewBox="0 0 24 24"><rect x="2.5" y="2.5" width="19" height="15" fill="#f4f8fc" stroke="#3a5a8a" stroke-width="1.2"/><rect x="3" y="3" width="18" height="3.5" fill="#7a9ac8"/><path d="M5 8H19" stroke="#aabbd0" stroke-width="1"/><path d="M7.5 21V12" stroke="#2a5aa8" stroke-width="3" stroke-linecap="round"/><path d="M12 21V12" stroke="#e0a030" stroke-width="3" stroke-linecap="round"/><path d="M16.5 21V12" stroke="#50a840" stroke-width="3" stroke-linecap="round"/></svg>
<svg style="position:absolute;left:1143px;top:232px;" width="24" height="24" viewBox="0 0 24 24"><path d="M10.5 2L13.5 8.3L20.5 9L15.3 13.7L16.8 20.5L10.5 17L4.2 20.5L5.7 13.7L0.5 9L7.5 8.3Z" fill="#f8cc40" stroke="#d09010" stroke-width="1"/><path d="M6 10L10.5 4.5L12.5 9Z" fill="#fde890" opacity=".8"/><path d="M17 6H23M18.5 8.5H23M19 11H23M18.5 13.5H22" stroke="#e8b050" stroke-width="1"/></svg>
<svg style="position:absolute;left:1143px;top:267.3px;" width="24" height="24" viewBox="0 0 24 24"><rect x="1.5" y="4.5" width="12" height="13" fill="#fff" stroke="#445566" stroke-width="1.2"/><path d="M3.5 8H10M3.5 10.5H9" stroke="#5a7a9a" stroke-width="1"/><rect x="10.5" y="7.5" width="12" height="12" fill="#e8f0f8" stroke="#445566" stroke-width="1.2"/><path d="M14 17L17 13L20 17Z" fill="#40a040"/><circle cx="19.5" cy="10.5" r="1.5" fill="#f0b030"/><path d="M4 13.5H12M9 10.5L12.5 13.5L9 16.5" fill="none" stroke="#1a70c8" stroke-width="2.4"/></svg>
<svg style="position:absolute;left:1143px;top:302.4px;" width="24" height="24" viewBox="0 0 24 24"><circle cx="11" cy="9" r="5.5" fill="#3a6ac0"/><path d="M4 21L11 8L20 20Z" fill="#1a4a90"/><path d="M11 8L20 20L14 20Z" fill="#3a8ac0"/><circle cx="18" cy="5" r="2.5" fill="#e8508a"/><circle cx="21" cy="12" r="2" fill="#f0c030"/><circle cx="4" cy="14" r="2.2" fill="#c050c0"/><circle cx="17" cy="19" r="2" fill="#50b050"/><path d="M7 3L8 5L10 5L8.5 6.5L9 8.5L7 7.5L5 8.5L5.5 6.5L4 5L6 5Z" fill="#f0a030"/></svg>
<svg style="position:absolute;left:1143px;top:337.6px;" width="24" height="24" viewBox="0 0 24 24"><path d="M2 8L17 2L22 15L7 21Z" fill="#f4f8f0" stroke="#5a8a5a" stroke-width="1.2"/><path d="M5 10L16 5.5L19.5 14L8.5 18.5Z" fill="#58b0e8"/><path d="M8.5 18.5L12 12L19.5 14Z" fill="#60b040"/><circle cx="9" cy="10.5" r="1.5" fill="#fff"/></svg>
<svg style="position:absolute;left:1143px;top:372.7px;" width="24" height="24" viewBox="0 0 24 24"><circle cx="12" cy="12.5" r="10" fill="#fafafa" stroke="#e8a040" stroke-width="2.2"/><circle cx="12" cy="12.5" r="8" fill="none" stroke="#f0d090" stroke-width="1"/><path d="M17 7L13 13.5L10.5 11Z" fill="#3a5ad0"/><path d="M7 18L10.5 11L13 13.5Z" fill="#d03030"/><text x="12" y="6.8" font-size="5" font-weight="bold" font-family="Liberation Sans" text-anchor="middle" fill="#222">N</text></svg>
<div style="left:8px;top:721px;width:880px;height:1px;background:#c8c8c8"></div>
<div style="left:888px;top:721px;width:287px;height:1.2px;background:#8a8a8a"></div>
<div style="left:8px;top:722px;width:1167px;height:31px;background:#f4f5f6"></div>
<div style="left:8px;top:752.5px;width:1167px;height:1.5px;background:#8e8e8e"></div>
<svg style="position:absolute;left:12px;top:728px;" width="3" height="19" viewBox="0 0 3 19"><rect x="0" y="0.0" width="1.6" height="1.6" fill="#8a8a8a"/><rect x="0" y="3.6" width="1.6" height="1.6" fill="#8a8a8a"/><rect x="0" y="7.2" width="1.6" height="1.6" fill="#8a8a8a"/><rect x="0" y="10.8" width="1.6" height="1.6" fill="#8a8a8a"/><rect x="0" y="14.4" width="1.6" height="1.6" fill="#8a8a8a"/></svg>
<div style="left:20.2px;top:724.3px;width:24.7px;height:26.5px;background:#c0d9f2;border:1px solid #7d9cbc"></div>
<svg style="position:absolute;left:24.5px;top:729.0px;" width="16" height="16" viewBox="0 0 16 16"><path d="M3.5 1V13.5L6.5 10.5L9 15L11 14L8.5 9.5H12.5Z" fill="#fff" stroke="#111" stroke-width="1.1" stroke-linejoin="round"/></svg>
<div style="left:48.6px;top:729px;width:1px;height:17px;background:#cdcdcd"></div>
<svg style="position:absolute;left:56.5px;top:729.0px;" width="16" height="16" viewBox="0 0 16 16"><path d="M1 15L15 1" stroke="#3a6aa8" stroke-width="1.6"/></svg>
<svg style="position:absolute;left:82.0px;top:729.0px;" width="16" height="16" viewBox="0 0 16 16"><path d="M0.5 8H14M9.5 3.5L14.5 8L9.5 12.5" fill="none" stroke="#3a6aa8" stroke-width="1.8"/></svg>
<svg style="position:absolute;left:107.0px;top:729.0px;" width="16" height="16" viewBox="0 0 16 16"><rect x="0.5" y="3.5" width="15" height="9" fill="#6aaae8" stroke="#1e5a9a" stroke-width="1"/><rect x="1.5" y="4.5" width="13" height="3" fill="#9ccaf4"/></svg>
<svg style="position:absolute;left:132.3px;top:729.0px;" width="16" height="16" viewBox="0 0 16 16"><ellipse cx="8" cy="8" rx="7.5" ry="4.7" fill="#6aaae8" stroke="#1e5a9a" stroke-width="1"/></svg>
<svg style="position:absolute;left:157.2px;top:729.0px;" width="16" height="16" viewBox="0 0 16 16"><path d="M1 1H15V5H13.5Q13 3 11 3H9.5V13.5L11.5 15H4.5L6.5 13.5V3H5Q3 3 2.5 5H1Z" fill="#4a6070"/></svg>
<svg style="position:absolute;left:189.0px;top:729.0px;" width="16" height="16" viewBox="0 0 16 16"><path d="M0.5 11Q3 9 4 12Q5 15 9 12Q12 10 15 12" fill="none" stroke="#3a6aa8" stroke-width="1.5"/><path d="M5 10L13.5 1.5L15.5 3.5L7 12L4.5 12.5Z" fill="#f0c848" stroke="#7a5a10" stroke-width=".8"/><path d="M13.5 1.5L14.5 .5L16 2L15.5 3.5Z" fill="#e07070"/></svg>
<svg style="position:absolute;left:225.0px;top:729.0px;" width="16" height="16" viewBox="0 0 16 16"><path d="M2.5 3.5L7 6.5L9 11L13 12.5" fill="none" stroke="#3a6aa8" stroke-width="1.5"/><circle cx="2.8" cy="3.5" r="2.3" fill="#7ab0e0" stroke="#2a5a90" stroke-width=".8"/><circle cx="13" cy="12.3" r="2.3" fill="#7ab0e0" stroke="#2a5a90" stroke-width=".8"/></svg>
<svg style="position:absolute;left:260.5px;top:729.0px;" width="16" height="16" viewBox="0 0 16 16"><path d="M8 0.8L15.2 8L8 15.2L0.8 8Z" fill="#6aaae8" stroke="#1e5a9a" stroke-width="1"/><path d="M8 2.5L12 6.5H4Z" fill="#a0d0f6"/></svg>
<svg style="position:absolute;left:296.5px;top:729.0px;" width="16" height="16" viewBox="0 0 16 16"><circle cx="8" cy="8" r="7.3" fill="#7ab4ea" stroke="#2a5a98" stroke-width="1"/><circle cx="5.5" cy="6" r="1" fill="#1a3a6a"/><circle cx="10.5" cy="6" r="1" fill="#1a3a6a"/><path d="M4 9.5Q8 13.5 12 9.5" fill="none" stroke="#1a3a6a" stroke-width="1.2"/></svg>
<svg style="position:absolute;left:332.5px;top:729.0px;" width="16" height="16" viewBox="0 0 16 16"><path d="M0.8 8L5 3.5V6H11V3.5L15.2 8L11 12.5V10H5V12.5Z" fill="#a8ccf0" stroke="#2a5a98" stroke-width="1"/></svg>
<svg style="position:absolute;left:369.0px;top:729.0px;" width="16" height="16" viewBox="0 0 16 16"><rect x="1.5" y="1.5" width="13" height="13" fill="#5aa0e0" stroke="#1e5090" stroke-width="1"/><path d="M1.5 4.5H14.5M4.5 1.5V14.5" stroke="#1e5090" stroke-width="1"/><rect x="5" y="5" width="9" height="9" fill="#7ab8ec"/></svg>
<svg style="position:absolute;left:405.0px;top:729.0px;" width="16" height="16" viewBox="0 0 16 16"><path d="M1 2Q1 .8 2.5 .8H13.5Q15.2 .8 15.2 2.5V9Q15.2 10.8 13.5 10.8H7L2.5 15L4 10.8H2.5Q1 10.8 1 9Z" fill="#8ac6f4" stroke="#2a6aa8" stroke-width="1"/></svg>
<svg style="position:absolute;left:440.6px;top:729.0px;" width="16" height="16" viewBox="0 0 16 16"><path d="M8 .8L10.2 5.6L15.3 6L11.4 9.4L12.6 14.6L8 11.8L3.4 14.6L4.6 9.4L.7 6L5.8 5.6Z" fill="#6aaae8" stroke="#1e5a9a" stroke-width="1"/></svg>
<svg style="position:absolute;left:486.0px;top:729.0px;" width="16" height="16" viewBox="0 0 16 16"><path d="M2 13L3 6L7.5 1.5L13.5 1.5L9.5 8L13.5 13Z" fill="none" stroke="#333" stroke-width="1"/><rect x="0.5" y="11.5" width="3" height="3" fill="#5a7aa0" stroke="#222" stroke-width=".6"/><rect x="1.5" y="4.5" width="3" height="3" fill="#5a7aa0" stroke="#222" stroke-width=".6"/><rect x="6.0" y="0.0" width="3" height="3" fill="#5a7aa0" stroke="#222" stroke-width=".6"/><rect x="12.0" y="0.0" width="3" height="3" fill="#5a7aa0" stroke="#222" stroke-width=".6"/><rect x="8.0" y="6.5" width="3" height="3" fill="#5a7aa0" stroke="#222" stroke-width=".6"/><rect x="12.0" y="11.5" width="3" height="3" fill="#5a7aa0" stroke="#222" stroke-width=".6"/></svg>
<svg style="position:absolute;left:511.29999999999995px;top:729.0px;" width="16" height="16" viewBox="0 0 16 16"><path d="M1 15L5 11" stroke="#3a5a90" stroke-width="1.5"/><circle cx="2" cy="14" r="1.5" fill="#3a5a90"/><path d="M4 10L12 2L15 5L7 13Z" fill="#f0c870" stroke="#806020" stroke-width=".8"/></svg>
<svg style="position:absolute;left:543.8px;top:729.0px;" width="16" height="16" viewBox="0 0 16 16"><rect x="0.5" y="4.5" width="15" height="11" fill="#f6e6c0" stroke="#a05a10" stroke-width="1.4"/><path d="M5 4L8 1L11 4" fill="none" stroke="#a05a10" stroke-width=".8"/><text x="8" y="13.5" font-size="8" font-weight="bold" font-family="Liberation Sans" fill="#1a2a50" text-anchor="middle">A</text></svg>
<svg style="position:absolute;left:569.0px;top:729.0px;" width="16" height="16" viewBox="0 0 16 16"><circle cx="10.5" cy="6" r="5" fill="#f0c040" stroke="#9a7010" stroke-width=".8"/><rect x="0.5" y="5.5" width="9" height="8" fill="#e86a30" stroke="#8a3a10" stroke-width=".8"/><path d="M8.5 15.5L11.5 9L15 15.5Z" fill="#6a80c8" stroke="#2a3a80" stroke-width=".8"/></svg>
<svg style="position:absolute;left:594.0px;top:729.0px;" width="16" height="16" viewBox="0 0 16 16"><rect x="0.5" y="2.5" width="15" height="12" fill="#c88a30" stroke="#6a4010" stroke-width="1"/><rect x="2.5" y="4.5" width="11" height="8" fill="#8ac070"/><path d="M2.5 10Q6 7 9 9Q12 11 13.5 9V12.5H2.5Z" fill="#4a8a40"/><rect x="2.5" y="4.5" width="11" height="3" fill="#a8d0f0"/></svg>
<svg style="position:absolute;left:627.0px;top:729.0px;" width="16" height="16" viewBox="0 0 16 16"><path d="M12.5 4.5Q9 0.5 4.5 2.5Q0 5 1.5 10Q3.5 15 9 14.5Q13 13.5 13.5 9.5H10Q9.5 11.5 7.5 11.5Q4.5 11.5 4.5 8Q4.5 5 7.5 4.5Q9.5 4.5 10.5 6.5L8 8.5H15.5V1Z" fill="#7aa0c8" stroke="#2a4a70" stroke-width="1"/></svg>
<svg style="position:absolute;left:651.0px;top:729.0px;" width="16" height="16" viewBox="0 0 16 16"><rect x="0.5" y="0.5" width="15" height="15" fill="#fafafa" stroke="#8a8a30" stroke-width="1"/><path d="M0.5 0.5V15.5" stroke="#5a9a30" stroke-width="2"/><rect x="2.5" y="5" width="4" height="4" fill="#5aa0e0" stroke="#1e5090" stroke-width=".6"/><path d="M15 7H10.5M8 7L11.5 4.5V9.5Z" fill="#e04020" stroke="#c03010" stroke-width="1.5"/></svg>
<svg style="position:absolute;left:687.0px;top:729.0px;" width="16" height="16" viewBox="0 0 16 16"><rect x="0.5" y="6.5" width="9" height="9" fill="#4a5a50" stroke="#222" stroke-width="1"/><rect x="6.5" y="0.5" width="9" height="9" fill="#4a5a50" stroke="#222" stroke-width="1"/><rect x="3" y="3" width="10" height="10" fill="#f6c830" stroke="#8a6a10" stroke-width="1"/></svg>
<svg style="position:absolute;left:732.0px;top:729.0px;" width="16" height="16" viewBox="0 0 16 16"><path d="M1.5 1V8Q1.5 11 5 11H8" fill="none" stroke="#e05030" stroke-width="2.2"/><rect x="1" y="1" width="5" height="4" fill="#5aa0e0" stroke="#1e5090" stroke-width=".6"/><path d="M6 8.5L10 6.5H15.5L12 9Z" fill="#a0d0f4" stroke="#1e5090" stroke-width=".6"/><path d="M6 8.5H12V15H6Z" fill="#5aa0e0" stroke="#1e5090" stroke-width=".6"/><path d="M12 9L15.5 6.5V12.5L12 15Z" fill="#2a70b8" stroke="#1e5090" stroke-width=".6"/></svg>
<svg style="position:absolute;left:757.0px;top:729.0px;" width="16" height="16" viewBox="0 0 16 16"><path d="M1 5H6M3.5 2.5V7.5M1.5 3L5.5 7M5.5 3L1.5 7" stroke="#e8a040" stroke-width="1"/><rect x="8" y="0.5" width="7" height="7" fill="#5aa0e0" stroke="#1e5090" stroke-width=".6"/><path d="M9 6.5L14 1.5" stroke="#fff" stroke-width="1.2"/><path d="M7.5 6.5V15.5L9.5 13.5L11 16L12 15.5L10.8 13H13.5Z" fill="#fff" stroke="#111" stroke-width=".9"/></svg>
<svg style="position:absolute;left:212.6px;top:735px;" width="6" height="4" viewBox="0 0 6 4"><path d="M0 0.5H6L3 3.5Z" fill="#000"/></svg>
<svg style="position:absolute;left:248.6px;top:735px;" width="6" height="4" viewBox="0 0 6 4"><path d="M0 0.5H6L3 3.5Z" fill="#000"/></svg>
<svg style="position:absolute;left:284.6px;top:735px;" width="6" height="4" viewBox="0 0 6 4"><path d="M0 0.5H6L3 3.5Z" fill="#000"/></svg>
<svg style="position:absolute;left:320.4px;top:735px;" width="6" height="4" viewBox="0 0 6 4"><path d="M0 0.5H6L3 3.5Z" fill="#000"/></svg>
<svg style="position:absolute;left:356.3px;top:735px;" width="6" height="4" viewBox="0 0 6 4"><path d="M0 0.5H6L3 3.5Z" fill="#000"/></svg>
<svg style="position:absolute;left:392.3px;top:735px;" width="6" height="4" viewBox="0 0 6 4"><path d="M0 0.5H6L3 3.5Z" fill="#000"/></svg>
<svg style="position:absolute;left:428.3px;top:735px;" width="6" height="4" viewBox="0 0 6 4"><path d="M0 0.5H6L3 3.5Z" fill="#000"/></svg>
<svg style="position:absolute;left:464.4px;top:735px;" width="6" height="4" viewBox="0 0 6 4"><path d="M0 0.5H6L3 3.5Z" fill="#000"/></svg>
<svg style="position:absolute;left:674px;top:735px;" width="6" height="4" viewBox="0 0 6 4"><path d="M0 0.5H6L3 3.5Z" fill="#000"/></svg>
<svg style="position:absolute;left:710.3px;top:735px;" width="6" height="4" viewBox="0 0 6 4"><path d="M0 0.5H6L3 3.5Z" fill="#000"/></svg>
<div style="left:181.3px;top:729px;width:1px;height:17px;background:#cdcdcd"></div>
<div style="left:477.5px;top:729px;width:1px;height:17px;background:#cdcdcd"></div>
<div style="left:535.3px;top:729px;width:1px;height:17px;background:#cdcdcd"></div>
<div style="left:618.5px;top:729px;width:1px;height:17px;background:#cdcdcd"></div>
<div style="left:723.6px;top:729px;width:1px;height:17px;background:#cdcdcd"></div>
<div style="left:784px;top:725px;width:10px;height:24.399999999999977px;background:linear-gradient(#f2f2f2,#d8d8d8 45%,#a6a6a6)"></div>
<svg style="position:absolute;left:786.0px;top:742.4px;" width="6" height="4" viewBox="0 0 6 4"><path d="M0 0.5H6L3 3.5Z" fill="#000"/></svg>
<div style="left:796px;top:722px;width:1px;height:30px;background:#dadada"></div>
<div style="left:8px;top:754px;width:1167px;height:21px;background:#f0f0f0"></div>
<span class="t" style="left:18.50px;top:760.04px;font-size:12px;color:#000;font-weight:normal;font-family:'Liberation Sans',sans-serif;font-style:normal;letter-spacing:-0.259px;">Shape 'AutoShape 3' selected</span>
<div style="left:420.3px;top:755px;width:1px;height:18px;background:#c4c4c4"></div>
<div style="left:641.8px;top:755px;width:1px;height:18px;background:#c4c4c4"></div>
<div style="left:657px;top:755px;width:1px;height:18px;background:#c4c4c4"></div>
<div style="left:686.7px;top:755px;width:1px;height:18px;background:#c4c4c4"></div>
<div style="left:756.7px;top:755px;width:1px;height:18px;background:#c4c4c4"></div>
<div style="left:995.4px;top:755px;width:1px;height:18px;background:#c4c4c4"></div>
<div style="left:1138.2px;top:755px;width:1px;height:18px;background:#c4c4c4"></div>
<svg style="position:absolute;left:428px;top:758px;" width="14" height="12" viewBox="0 0 14 12"><path d="M3 0.5V6M0.5 3H6" stroke="#222" stroke-width="1"/><path d="M3 5.5V11.5H13.5V5.5H5" fill="none" stroke="#222" stroke-width="1" stroke-dasharray="1 1"/></svg>
<span class="t" style="left:448.40px;top:760.04px;font-size:12px;color:#000;font-weight:normal;font-family:'Liberation Sans',sans-serif;font-style:normal;letter-spacing:-0.430px;">6.69 / 5.51</span>
<svg style="position:absolute;left:534px;top:758px;" width="15" height="13" viewBox="0 0 15 13"><rect x="5.5" y="1.5" width="8" height="10" fill="none" stroke="#222" stroke-width="1" stroke-dasharray="1 1"/><path d="M1 4V9" stroke="#222" stroke-width="1.2" stroke-dasharray="1 1"/><path d="M5 0.5L6.5 2M13.5 0.5L12 2" stroke="#222" stroke-width="1"/></svg>
<span class="t" style="left:554.90px;top:760.04px;font-size:12px;color:#000;font-weight:normal;font-family:'Liberation Sans',sans-serif;font-style:normal;letter-spacing:-0.630px;">1.78 x 1.67</span>
<span class="t" style="left:646.50px;top:760.04px;font-size:12px;color:#444;font-weight:normal;font-family:'Liberation Sans',sans-serif;font-style:normal;">*</span>
<span class="t" style="left:689.00px;top:760.04px;font-size:12px;color:#000;font-weight:normal;font-family:'Liberation Sans',sans-serif;font-style:normal;letter-spacing:-0.267px;">Slide 11 / 46</span>
<span class="t" style="left:761.80px;top:760.04px;font-size:12px;color:#000;font-weight:normal;font-family:'Liberation Sans',sans-serif;font-style:normal;letter-spacing:-0.040px;">Title2</span>
<svg style="position:absolute;left:1000px;top:759px;" width="13" height="13" viewBox="0 0 13 13"><circle cx="6.5" cy="6.5" r="5.5" fill="#e8eef4" stroke="#5a6a7a" stroke-width="1.2"/><path d="M3.8 6.5H9.2" stroke="#3a4a5a" stroke-width="1.4"/></svg>
<div style="left:1017px;top:764px;width:97px;height:1.2px;background:#707070"></div>
<div style="left:1017px;top:762px;width:1px;height:4px;background:#707070"></div>
<div style="left:1064px;top:760px;width:1px;height:9px;background:#909090"></div>
<svg style="position:absolute;left:1032px;top:761px;" width="10" height="10" viewBox="0 0 10 10"><circle cx="5" cy="5" r="4.2" fill="#7a8a9a" stroke="#3a4a5a" stroke-width="1"/></svg>
<svg style="position:absolute;left:1118px;top:759px;" width="13" height="13" viewBox="0 0 13 13"><circle cx="6.5" cy="6.5" r="5.5" fill="#e8eef4" stroke="#5a6a7a" stroke-width="1.2"/><path d="M3.8 6.5H9.2M6.5 3.8V9.2" stroke="#3a4a5a" stroke-width="1.4"/></svg>
<span class="t" style="left:1142.70px;top:760.04px;font-size:12px;color:#000;font-weight:normal;font-family:'Liberation Sans',sans-serif;font-style:normal;letter-spacing:-0.850px;">46%</span>
<div style="left:0px;top:0px;width:1131px;height:1px;background:#4a90d0"></div>
<div style="left:1176px;top:0px;width:7px;height:1px;background:#4a90d0"></div>
<div style="left:0px;top:0px;width:1px;height:783px;background:#3d86c6"></div>
<div style="left:1182px;top:0px;width:1px;height:783px;background:#3d86c6"></div>
<div style="left:0px;top:782px;width:1183px;height:1px;background:#3d86c6"></div>
<div style="left:8px;top:30px;width:1167px;height:1px;background:#5a8eb8"></div>
<div style="left:7.5px;top:30px;width:1px;height:745.5px;background:#86aed0"></div>
<div style="left:1175px;top:30px;width:1px;height:745.5px;background:#6a9ac0"></div>
<div style="left:8px;top:775px;width:1167px;height:1px;background:#6a92b4"></div>
<div style="left:1173px;top:117px;width:1px;height:604px;background:#98a4b0"></div>
<div style="left:1174px;top:31px;width:1px;height:744px;background:#dff6fb"></div>
</body></html>
